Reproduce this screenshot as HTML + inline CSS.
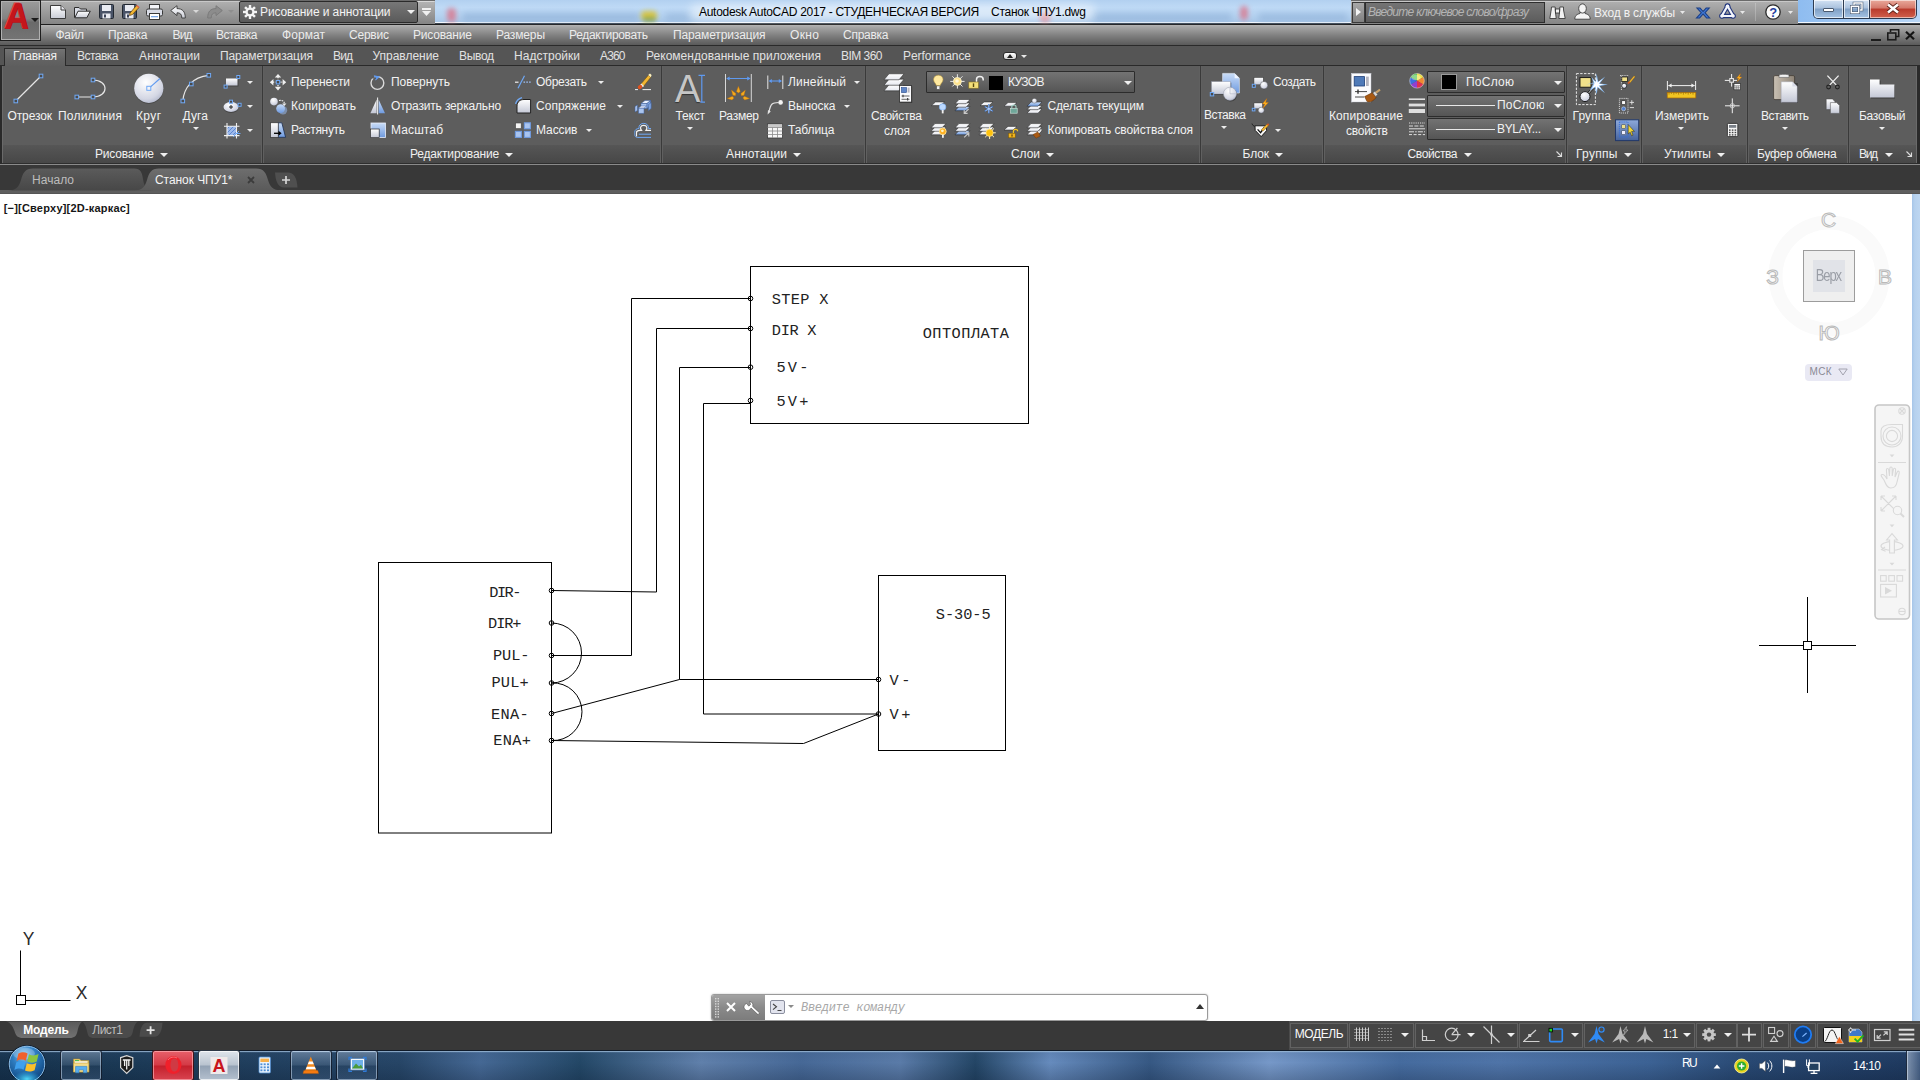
<!DOCTYPE html>
<html lang="ru"><head><meta charset="utf-8"><title>Autodesk AutoCAD 2017 - Станок ЧПУ1.dwg</title>
<style>
html,body{margin:0;padding:0;background:#fff;overflow:hidden}
#root{position:relative;width:1920px;height:1080px;overflow:hidden;background:#fff;font-family:"Liberation Sans",sans-serif}
#root div,#root span,#root svg{position:absolute}
#root svg{overflow:visible}
.t{white-space:pre;}
.pt{background:linear-gradient(#565656,#474747);}
.dd{background:linear-gradient(#737373 0,#646464 50%,#555 100%);border:1px solid #2c2c2c;box-sizing:border-box;border-radius:1px}
.sb{border:1px solid #626262;box-sizing:border-box;background:#454545}
</style></head><body><div id="root">

<div style="left:0px;top:0px;width:1920px;height:25px;background:linear-gradient(#b2d0f0 0,#bfdaf6 30%,#b6d3f1 60%,#aac8e8 86%,#f2f7fd 88%,#f2f7fd 92%,#4f5f72 92%,#1e1e1e 97%)"></div>
<div style="left:462px;top:13px;width:178px;height:8px;background:#86a9d2;opacity:0.55;filter:blur(3px);border-radius:4px"></div>
<div style="left:665px;top:13px;width:26px;height:8px;background:#86a9d2;opacity:0.45;filter:blur(3px);border-radius:4px"></div>
<div style="left:1092px;top:13px;width:140px;height:8px;background:#86a9d2;opacity:0.5;filter:blur(3px);border-radius:4px"></div>
<div style="left:1258px;top:13px;width:90px;height:8px;background:#86a9d2;opacity:0.5;filter:blur(3px);border-radius:4px"></div>
<div style="left:447px;top:8px;width:9px;height:14px;background:#dc6f84;opacity:0.75;filter:blur(2.5px);border-radius:4px"></div>
<div style="left:641px;top:11px;width:16px;height:9px;background:#dcc228;opacity:0.85;filter:blur(2.5px);border-radius:4px"></div>
<div style="left:643px;top:17px;width:13px;height:5px;background:#5e8e3a;opacity:0.5;filter:blur(2px);border-radius:4px"></div>
<div style="left:1040px;top:12px;width:10px;height:10px;background:#e0707a;opacity:0.8;filter:blur(2.5px);border-radius:4px"></div>
<div style="left:1240px;top:6px;width:8px;height:14px;background:#dc6f84;opacity:0.75;filter:blur(2.5px);border-radius:4px"></div>
<div style="left:690px;top:4px;width:405px;height:16px;background:#fff;opacity:.5;filter:blur(5px);border-radius:9px"></div>
<span class="t" style="left:699.0px;top:3.5px;font:12px/16px 'Liberation Sans',sans-serif;color:#000;letter-spacing:-0.29px;">Autodesk AutoCAD 2017 - СТУДЕНЧЕСКАЯ ВЕРСИЯ    Станок ЧПУ1.dwg</span>
<div style="left:0px;top:0px;width:435px;height:25px;background:linear-gradient(#6a6a6a 0,#6a6a6a 4%,#c8c8c8 4%,#c8c8c8 8%,#aeaeae 9%,#858585 96%,#1e1e1e 96%)"></div>
<div style="left:1351px;top:0px;width:447px;height:25px;background:linear-gradient(#6a6a6a 0,#6a6a6a 4%,#c8c8c8 4%,#c8c8c8 8%,#aeaeae 9%,#858585 96%,#1e1e1e 96%)"></div>
<div style="left:0px;top:25px;width:1920px;height:21px;background:linear-gradient(#b4b4b4 0,#a6a6a6 10%,#808080 50%,#5a5a5a 95%,#2a2a2a 95.5%)"></div>
<div style="left:0px;top:46px;width:1920px;height:20px;background:#555;border-bottom:1px solid #2a2a2a;box-sizing:border-box"></div>
<div style="left:0px;top:66px;width:1920px;height:98px;background:#2f2f2f"></div>
<div style="left:2px;top:66px;width:1915px;height:79px;background:#5d5d5d"></div>
<div class="pt" style="left:2px;top:145px;width:1915px;height:18px;"></div>
<div style="left:0px;top:163px;width:1920px;height:1px;background:#2e2e2e"></div>
<div style="left:0px;top:164px;width:1920px;height:1px;background:#8a8a8a"></div>
<div style="left:0px;top:165px;width:1920px;height:26px;background:#383838"></div>
<div style="left:0px;top:190px;width:1920px;height:4px;background:linear-gradient(#5e5e5e 0,#5e5e5e 75%,#4c4c4c 100%)"></div>
<div style="left:0px;top:194px;width:1912px;height:827px;background:#fff"></div>
<div style="left:1912px;top:194px;width:8px;height:827px;background:linear-gradient(90deg,#a6c5e8 0,#b6d1ee 35%,#bdd6f1 100%)"></div>
<div style="left:0px;top:1021px;width:1920px;height:29px;background:#383838"></div>
<div style="left:0px;top:1050px;width:1920px;height:30px;background:linear-gradient(90deg,#16324c 0,#1a3854 5%,#264566 20.8%,#456894 25%,#234766 30.2%,#6080ab 36.5%,#466896 41.7%,#5a7ba8 46.9%,#234565 50.8%,#668bbd 54.7%,#365883 59.9%,#7698c8 66.1%,#456b9e 72.9%,#4f74a8 78.1%,#3c6294 85.9%,#284872 91.1%,#1f3a60 99%)"></div>
<div style="left:0px;top:1050px;width:1920px;height:30px;background:linear-gradient(rgba(150,180,215,.55) 0,rgba(60,90,130,.15) 7%,rgba(10,25,45,0) 40%,rgba(8,20,40,.22) 100%);border-top:1px solid #0f1a28;box-sizing:border-box"></div>
<div style="left:0px;top:1051px;width:1920px;height:1px;background:rgba(150,180,210,.75)"></div>
<div style="left:0px;top:0px;width:41px;height:41px;background:#1e1e1e"></div>
<div style="left:1px;top:1px;width:39px;height:39px;background:linear-gradient(#9a9a9a 0,#828282 45%,#6a6a6a 55%,#747474 100%);border:1px solid #b0b0b0;box-sizing:border-box"></div>
<span class="t" style="left:2px;top:-3px;width:30px;text-align:center;font:bold 37px/40px 'Liberation Sans',sans-serif;color:#c4161c;transform:scale(.92,1) skewX(-4deg);text-shadow:1px 0 0 #8e0c10,-1px -1px 0 #e8474d">A</span>
<svg style="left:30.5px;top:17.5px" width="8" height="4" viewBox="0 0 8 4"><path d="M0 0H8L4.0 4Z" fill="#1a1a1a"/></svg>
<svg style="left:50px;top:5px;" width="16" height="14" viewBox="0 0 16 14"><defs><linearGradient id="wg" x1="0" y1="0" x2="0" y2="1"><stop offset="0" stop-color="#fff"/><stop offset="1" stop-color="#c9ccd6"/></linearGradient></defs><path d="M.5 .5H11L15.5 5V13.5H.5Z" fill="url(#wg)" stroke="#3c3c3c" stroke-width="1"/><path d="M11 .5V5H15.5" fill="#e8e8ee" stroke="#3c3c3c" stroke-width="1"/></svg>
<svg style="left:74px;top:5px;" width="17" height="14" viewBox="0 0 17 14"><path d="M.5 12.5V2.5H5L6.5 4H12.5V6" fill="#d8dbe4" stroke="#2e2e2e"/><path d="M.8 12.8L4 6.2H16.3L12.8 12.8Z" fill="url(#wg)" stroke="#2e2e2e"/></svg>
<svg style="left:99px;top:4px;" width="15" height="15" viewBox="0 0 15 15"><rect x=".5" y=".5" width="14" height="14" rx="1" fill="#4a5468" stroke="#222831"/><rect x="3" y="1" width="9" height="6" fill="#e9ebf2"/><rect x="3.5" y="9.5" width="8" height="5" fill="#e9ebf2"/><rect x="5" y="10.5" width="2" height="3" fill="#394156"/></svg>
<svg style="left:122px;top:4px;" width="17" height="15" viewBox="0 0 17 15"><rect x=".5" y=".5" width="14" height="14" rx="1" fill="#4a5468" stroke="#222831"/><rect x="3" y="1" width="9" height="6" fill="#e9ebf2"/><rect x="3.5" y="9.5" width="8" height="5" fill="#e9ebf2"/><rect x="5" y="10.5" width="2" height="3" fill="#394156"/><path d="M8 9L14.5 1.5 17 3.5 10.5 10.5 7.5 11.5Z" fill="#f2b632" stroke="#5a3b06" stroke-width=".7"/><path d="M14.5 1.5L17 3.5" stroke="#e8674a" stroke-width="1.6"/></svg>
<svg style="left:146px;top:4px;" width="17" height="16" viewBox="0 0 17 16"><rect x="3.5" y=".5" width="10" height="5" fill="#f4f5f9" stroke="#3a3a3a"/><rect x=".5" y="5" width="16" height="7" rx="1.5" fill="#d9dce6" stroke="#3a3a3a"/><rect x="3.5" y="9.5" width="10" height="6" fill="#fff" stroke="#3a3a3a"/><rect x="5" y="12" width="7" height="1.3" fill="#79a7e8"/></svg>
<svg style="left:170px;top:5px;" width="16" height="14" viewBox="0 0 16 14"><path d="M.7 5.5L7 .7V3.6C12.5 3.6 15.3 6.5 15.3 13H11.8C11.8 9.3 10.3 7.8 7 7.8V10.6Z" fill="url(#wg)" stroke="#3a3a3a" stroke-width=".9"/></svg>
<svg style="left:192.5px;top:10.0px" width="6" height="3" viewBox="0 0 6 3"><path d="M0 0H6L3.0 3Z" fill="#d8d8d8"/></svg>
<svg style="left:207px;top:5px;" width="16" height="14" viewBox="0 0 16 14"><path d="M15.3 5.5L9 .7V3.6C3.5 3.6 .7 6.5 .7 13H4.2C4.2 9.3 5.7 7.8 9 7.8V10.6Z" fill="#8c8c8c" stroke="#787878" stroke-width=".9"/></svg>
<svg style="left:228.0px;top:10.0px" width="6" height="3" viewBox="0 0 6 3"><path d="M0 0H6L3.0 3Z" fill="#8e8e8e"/></svg>
<div style="left:239px;top:1px;width:179px;height:22px;background:linear-gradient(#777,#5a5a5a);border:1px solid #2a2a2a;box-sizing:border-box;border-radius:2px"></div>
<div style="left:418px;top:1px;width:16px;height:22px;background:linear-gradient(#d8d8d8 0,#d8d8d8 5%,#b2b2b2 6%,#868686 100%)"></div>
<svg style="left:243px;top:5px;" width="14" height="14" viewBox="0 0 14 14"><g fill="#f4f4f4"><circle cx="7" cy="7" r="4.6"/><g transform="rotate(0 7 7)"><rect x="5.8" y="0" width="2.4" height="3"/><rect x="5.8" y="11" width="2.4" height="3"/></g><g transform="rotate(45 7 7)"><rect x="5.8" y="0" width="2.4" height="3"/><rect x="5.8" y="11" width="2.4" height="3"/></g><g transform="rotate(90 7 7)"><rect x="5.8" y="0" width="2.4" height="3"/><rect x="5.8" y="11" width="2.4" height="3"/></g><g transform="rotate(135 7 7)"><rect x="5.8" y="0" width="2.4" height="3"/><rect x="5.8" y="11" width="2.4" height="3"/></g></g><circle cx="7" cy="7" r="2.3" fill="#666"/></svg>
<span class="t" style="left:260.0px;top:3.5px;font:12px/16px 'Liberation Sans',sans-serif;color:#f4f4f4;letter-spacing:-0.10px;">Рисование и аннотации</span>
<svg style="left:407.0px;top:10.0px" width="8" height="4" viewBox="0 0 8 4"><path d="M0 0H8L4.0 4Z" fill="#f0f0f0"/></svg>
<div style="left:422px;top:8px;width:9px;height:2px;background:#f0f0f0"></div>
<svg style="left:422.0px;top:11.0px" width="9" height="5" viewBox="0 0 9 5"><path d="M0 0H9L4.5 5Z" fill="#f0f0f0"/></svg>
<span class="t" style="left:55.5px;top:26.5px;font:12px/16px 'Liberation Sans',sans-serif;color:#ececec;letter-spacing:-0.33px;">Файл</span>
<span class="t" style="left:108.0px;top:26.5px;font:12px/16px 'Liberation Sans',sans-serif;color:#ececec;letter-spacing:-0.21px;">Правка</span>
<span class="t" style="left:172.5px;top:26.5px;font:12px/16px 'Liberation Sans',sans-serif;color:#ececec;letter-spacing:-0.85px;">Вид</span>
<span class="t" style="left:216.0px;top:26.5px;font:12px/16px 'Liberation Sans',sans-serif;color:#ececec;letter-spacing:-0.52px;">Вставка</span>
<span class="t" style="left:282.0px;top:26.5px;font:12px/16px 'Liberation Sans',sans-serif;color:#ececec;letter-spacing:0.07px;">Формат</span>
<span class="t" style="left:349.0px;top:26.5px;font:12px/16px 'Liberation Sans',sans-serif;color:#ececec;letter-spacing:-0.22px;">Сервис</span>
<span class="t" style="left:413.0px;top:26.5px;font:12px/16px 'Liberation Sans',sans-serif;color:#ececec;letter-spacing:-0.18px;">Рисование</span>
<span class="t" style="left:496.0px;top:26.5px;font:12px/16px 'Liberation Sans',sans-serif;color:#ececec;letter-spacing:-0.14px;">Размеры</span>
<span class="t" style="left:569.0px;top:26.5px;font:12px/16px 'Liberation Sans',sans-serif;color:#ececec;letter-spacing:-0.32px;">Редактировать</span>
<span class="t" style="left:673.0px;top:26.5px;font:12px/16px 'Liberation Sans',sans-serif;color:#ececec;letter-spacing:-0.14px;">Параметризация</span>
<span class="t" style="left:790.0px;top:26.5px;font:12px/16px 'Liberation Sans',sans-serif;color:#ececec;letter-spacing:0.38px;">Окно</span>
<span class="t" style="left:843.0px;top:26.5px;font:12px/16px 'Liberation Sans',sans-serif;color:#ececec;letter-spacing:-0.26px;">Справка</span>
<div style="left:1871px;top:39px;width:10px;height:2px;background:#1c1c1c"></div>
<svg style="left:1887px;top:29px;" width="13" height="12" viewBox="0 0 13 12"><path d="M3.5 3V.8H11.7V7.5H9" fill="none" stroke="#1c1c1c" stroke-width="1.6"/><rect x=".8" y="4" width="8" height="6.8" fill="none" stroke="#1c1c1c" stroke-width="1.6"/></svg>
<svg style="left:1905px;top:31px;" width="10" height="9" viewBox="0 0 10 9"><path d="M1 .8L9 8.2M9 .8L1 8.2" stroke="#141414" stroke-width="2.2"/></svg>
<div style="left:1352px;top:2px;width:13px;height:21px;background:linear-gradient(#a8a8a8,#808080);border:1px solid #3a3a3a;box-sizing:border-box"></div>
<svg style="left:1356px;top:8px;" width="5" height="8" viewBox="0 0 5 8"><path d="M0 0L5 4L0 8Z" fill="#f4f4f4"/></svg>
<div style="left:1365px;top:2px;width:180px;height:21px;background:linear-gradient(#747474,#5c5c5c);border:1px solid #2e2e2e;box-sizing:border-box"></div>
<span class="t" style="left:1368.0px;top:3.5px;font:italic 12px/16px 'Liberation Sans',sans-serif;color:#b4b4b4;letter-spacing:-0.71px;">Введите ключевое слово/фразу</span>
<svg style="left:1549px;top:4px;" width="17" height="16" viewBox="0 0 17 16"><g fill="#f2f2f2" stroke="#2e2e2e" stroke-width=".8"><path d="M2.5 3H6.2V6L7.2 14.5H.8L2.2 6Z"/><path d="M10.8 3H14.5V6L16.2 14.5H9.8L10.8 6Z"/><rect x="6.5" y="5" width="4" height="4"/></g></svg>
<svg style="left:1574px;top:3px;" width="17" height="17" viewBox="0 0 17 17"><g fill="#f4f4f4" stroke="#2e2e2e" stroke-width=".8"><path d="M.8 16.2C.8 12 4 11 6 10.5V9.2H11V10.5C13 11 16.2 12 16.2 16.2Z"/><ellipse cx="8.5" cy="5.5" rx="3.8" ry="4.6"/></g></svg>
<span class="t" style="left:1594.0px;top:4.7px;font:12px/16px 'Liberation Sans',sans-serif;color:#f2f2f2;letter-spacing:-0.16px;">Вход в службы</span>
<svg style="left:1679.5px;top:10.5px" width="5" height="3" viewBox="0 0 5 3"><path d="M0 0H5L2.5 3Z" fill="#e8e8e8"/></svg>
<span class="t" style="left:1693px;top:2.5px;width:20px;text-align:center;font:bold 15.5px/20px 'Liberation Sans',sans-serif;color:#3f78d4;-webkit-text-stroke:.9px #1c3f86;transform:scale(1.32,1)">X</span>
<svg style="left:1719px;top:3px;" width="17" height="16" viewBox="0 0 17 16"><path d="M8.5 3L14.2 13H2.8Z" fill="none" stroke="#24387e" stroke-width="4.4" stroke-linejoin="round"/><circle cx="8.5" cy="3.2" r="2.9" fill="#24387e"/><circle cx="2.9" cy="13" r="2.7" fill="#24387e"/><circle cx="14.1" cy="13" r="2.7" fill="#24387e"/><path d="M8.5 3L14.2 13H2.8Z" fill="none" stroke="#f4f6fc" stroke-width="2.2" stroke-linejoin="round"/><circle cx="8.5" cy="3.2" r="1.8" fill="#f4f6fc"/><circle cx="2.9" cy="13" r="1.7" fill="#f4f6fc"/><circle cx="14.1" cy="13" r="1.7" fill="#f4f6fc"/></svg>
<svg style="left:1739.5px;top:10.5px" width="5" height="3" viewBox="0 0 5 3"><path d="M0 0H5L2.5 3Z" fill="#e8e8e8"/></svg>
<div style="left:1755px;top:3px;width:1px;height:18px;background:rgba(255,255,255,.22)"></div>
<svg style="left:1765px;top:4px;" width="16" height="16" viewBox="0 0 16 16"><circle cx="8" cy="8" r="7.2" fill="#fdfdfd" stroke="#2a2a2a" stroke-width="1.3"/></svg>
<span class="t" style="left:1769.3px;top:3.5px;font:bold 13px/17px 'Liberation Sans',sans-serif;color:#1f3fa0;letter-spacing:0.00px;">?</span>
<svg style="left:1787.5px;top:10.5px" width="5" height="3" viewBox="0 0 5 3"><path d="M0 0H5L2.5 3Z" fill="#e8e8e8"/></svg>
<div style="left:1798px;top:0px;width:122px;height:22px;background:linear-gradient(90deg,#8ebcf0,#a8ccf4 60%,#b8d6f6);"></div>
<div style="left:1813px;top:0px;width:104px;height:19px;background:#2d3b50;border-radius:0 0 5px 5px"></div>
<div style="left:1814px;top:0px;width:29px;height:18px;background:linear-gradient(#d3e2f3 0,#a9c1dd 45%,#7f9fc4 50%,#a5c3e4 100%);border-radius:0 0 0 4px;box-shadow:inset 0 0 0 1px rgba(255,255,255,.65)"></div>
<div style="left:1844px;top:0px;width:25px;height:18px;background:linear-gradient(#d3e2f3 0,#a9c1dd 45%,#7f9fc4 50%,#a5c3e4 100%);box-shadow:inset 0 0 0 1px rgba(255,255,255,.65)"></div>
<div style="left:1870px;top:0px;width:46px;height:18px;background:linear-gradient(#e9a99b 0,#d4786a 45%,#b93a2b 50%,#d0614c 100%);border-radius:0 0 4px 0;box-shadow:inset 0 0 0 1px rgba(255,255,255,.55)"></div>
<div style="left:1823px;top:8px;width:11px;height:4px;background:#fff;border:1px solid #4a5a70;box-sizing:border-box;border-radius:1px"></div>
<svg style="left:1850px;top:2px;" width="13" height="12" viewBox="0 0 13 12"><path d="M4 3.5V1H12V8H9.5" fill="none" stroke="#4a5a70" stroke-width="2.6"/><path d="M4 3.5V1H12V8H9.5" fill="none" stroke="#fff" stroke-width="1.4"/><rect x="1.3" y="4.3" width="7.4" height="6.4" fill="none" stroke="#4a5a70" stroke-width="2.6"/><rect x="1.3" y="4.3" width="7.4" height="6.4" fill="none" stroke="#fff" stroke-width="1.4"/></svg>
<svg style="left:1886px;top:3px;" width="14" height="11" viewBox="0 0 14 11"><path d="M2 1.5L12 9.5M12 1.5L2 9.5" stroke="#5a2018" stroke-width="4.2"/><path d="M2 1.5L12 9.5M12 1.5L2 9.5" stroke="#fff" stroke-width="2.6"/></svg>
<div style="left:4px;top:48px;width:62px;height:18px;background:linear-gradient(#737373,#636363 60%,#5e5e5e);border:1px solid #2a2a2a;border-bottom:none;box-sizing:border-box"></div>
<span class="t" style="left:13.0px;top:47.5px;font:12px/16px 'Liberation Sans',sans-serif;color:#f0f0f0;letter-spacing:-0.28px;">Главная</span>
<span class="t" style="left:77.0px;top:47.5px;font:12px/16px 'Liberation Sans',sans-serif;color:#e2e2e2;letter-spacing:-0.52px;">Вставка</span>
<span class="t" style="left:139.0px;top:47.5px;font:12px/16px 'Liberation Sans',sans-serif;color:#e2e2e2;letter-spacing:0.13px;">Аннотации</span>
<span class="t" style="left:220.0px;top:47.5px;font:12px/16px 'Liberation Sans',sans-serif;color:#e2e2e2;letter-spacing:-0.10px;">Параметризация</span>
<span class="t" style="left:333.0px;top:47.5px;font:12px/16px 'Liberation Sans',sans-serif;color:#e2e2e2;letter-spacing:-0.85px;">Вид</span>
<span class="t" style="left:372.5px;top:47.5px;font:12px/16px 'Liberation Sans',sans-serif;color:#e2e2e2;letter-spacing:-0.02px;">Управление</span>
<span class="t" style="left:459.0px;top:47.5px;font:12px/16px 'Liberation Sans',sans-serif;color:#e2e2e2;letter-spacing:-0.32px;">Вывод</span>
<span class="t" style="left:514.0px;top:47.5px;font:12px/16px 'Liberation Sans',sans-serif;color:#e2e2e2;letter-spacing:0.02px;">Надстройки</span>
<span class="t" style="left:600.0px;top:47.5px;font:12px/16px 'Liberation Sans',sans-serif;color:#e2e2e2;letter-spacing:-0.84px;">A360</span>
<span class="t" style="left:646.0px;top:47.5px;font:12px/16px 'Liberation Sans',sans-serif;color:#e2e2e2;letter-spacing:0.03px;">Рекомендованные приложения</span>
<span class="t" style="left:841.0px;top:47.5px;font:12px/16px 'Liberation Sans',sans-serif;color:#e2e2e2;letter-spacing:-0.53px;">BIM 360</span>
<span class="t" style="left:903.0px;top:47.5px;font:12px/16px 'Liberation Sans',sans-serif;color:#e2e2e2;letter-spacing:-0.07px;">Performance</span>
<div style="left:1003px;top:52px;width:14px;height:8px;background:linear-gradient(#fff,#d4d4d4);border-radius:3px;border:1px solid #2c2c2c;box-sizing:border-box"></div>
<svg style="left:1007px;top:54px;" width="6" height="4" viewBox="0 0 6 4"><path d="M0 4H6L3 0Z" fill="#222"/></svg>
<svg style="left:1020.5px;top:54.5px" width="6" height="3" viewBox="0 0 6 3"><path d="M0 0H6L3.0 3Z" fill="#e8e8e8"/></svg>
<div style="left:261px;top:66px;width:1px;height:97px;background:#606060"></div>
<div style="left:262px;top:66px;width:1px;height:97px;background:#3a3a3a"></div>
<div style="left:263px;top:66px;width:1px;height:97px;background:#606060"></div>
<div style="left:660px;top:66px;width:1px;height:97px;background:#606060"></div>
<div style="left:661px;top:66px;width:1px;height:97px;background:#3a3a3a"></div>
<div style="left:662px;top:66px;width:1px;height:97px;background:#606060"></div>
<div style="left:864px;top:66px;width:1px;height:97px;background:#606060"></div>
<div style="left:865px;top:66px;width:1px;height:97px;background:#3a3a3a"></div>
<div style="left:866px;top:66px;width:1px;height:97px;background:#606060"></div>
<div style="left:1199px;top:66px;width:1px;height:97px;background:#606060"></div>
<div style="left:1200px;top:66px;width:1px;height:97px;background:#3a3a3a"></div>
<div style="left:1201px;top:66px;width:1px;height:97px;background:#606060"></div>
<div style="left:1322px;top:66px;width:1px;height:97px;background:#606060"></div>
<div style="left:1323px;top:66px;width:1px;height:97px;background:#3a3a3a"></div>
<div style="left:1324px;top:66px;width:1px;height:97px;background:#606060"></div>
<div style="left:1565px;top:66px;width:1px;height:97px;background:#606060"></div>
<div style="left:1566px;top:66px;width:1px;height:97px;background:#3a3a3a"></div>
<div style="left:1567px;top:66px;width:1px;height:97px;background:#606060"></div>
<div style="left:1640px;top:66px;width:1px;height:97px;background:#606060"></div>
<div style="left:1641px;top:66px;width:1px;height:97px;background:#3a3a3a"></div>
<div style="left:1642px;top:66px;width:1px;height:97px;background:#606060"></div>
<div style="left:1746px;top:66px;width:1px;height:97px;background:#606060"></div>
<div style="left:1747px;top:66px;width:1px;height:97px;background:#3a3a3a"></div>
<div style="left:1748px;top:66px;width:1px;height:97px;background:#606060"></div>
<div style="left:1847px;top:66px;width:1px;height:97px;background:#606060"></div>
<div style="left:1848px;top:66px;width:1px;height:97px;background:#3a3a3a"></div>
<div style="left:1849px;top:66px;width:1px;height:97px;background:#606060"></div>
<div style="left:0px;top:66px;width:2px;height:98px;background:#2a2a2a"></div>
<div style="left:2px;top:66px;width:1px;height:97px;background:#6a6a6a"></div>
<div style="left:1917px;top:66px;width:3px;height:98px;background:#2a2a2a"></div>
<div style="left:1916px;top:66px;width:1px;height:97px;background:#6a6a6a"></div>
<span class="t" style="left:95.0px;top:145.5px;font:12px/16px 'Liberation Sans',sans-serif;color:#f0f0f0;letter-spacing:-0.18px;">Рисование</span>
<svg style="left:160.0px;top:152.5px" width="8" height="4" viewBox="0 0 8 4"><path d="M0 0H8L4.0 4Z" fill="#f0f0f0"/></svg>
<span class="t" style="left:410.0px;top:145.5px;font:12px/16px 'Liberation Sans',sans-serif;color:#f0f0f0;letter-spacing:-0.18px;">Редактирование</span>
<svg style="left:505.0px;top:152.5px" width="8" height="4" viewBox="0 0 8 4"><path d="M0 0H8L4.0 4Z" fill="#f0f0f0"/></svg>
<span class="t" style="left:726.0px;top:145.5px;font:12px/16px 'Liberation Sans',sans-serif;color:#f0f0f0;letter-spacing:0.13px;">Аннотации</span>
<svg style="left:793.0px;top:152.5px" width="8" height="4" viewBox="0 0 8 4"><path d="M0 0H8L4.0 4Z" fill="#f0f0f0"/></svg>
<span class="t" style="left:1011.0px;top:145.5px;font:12px/16px 'Liberation Sans',sans-serif;color:#f0f0f0;letter-spacing:-0.06px;">Слои</span>
<svg style="left:1046.0px;top:152.5px" width="8" height="4" viewBox="0 0 8 4"><path d="M0 0H8L4.0 4Z" fill="#f0f0f0"/></svg>
<span class="t" style="left:1242.5px;top:145.5px;font:12px/16px 'Liberation Sans',sans-serif;color:#f0f0f0;letter-spacing:-0.10px;">Блок</span>
<svg style="left:1275.0px;top:152.5px" width="8" height="4" viewBox="0 0 8 4"><path d="M0 0H8L4.0 4Z" fill="#f0f0f0"/></svg>
<span class="t" style="left:1407.5px;top:145.5px;font:12px/16px 'Liberation Sans',sans-serif;color:#f0f0f0;letter-spacing:-0.38px;">Свойства</span>
<svg style="left:1464.0px;top:152.5px" width="8" height="4" viewBox="0 0 8 4"><path d="M0 0H8L4.0 4Z" fill="#f0f0f0"/></svg>
<span class="t" style="left:1576.0px;top:145.5px;font:12px/16px 'Liberation Sans',sans-serif;color:#f0f0f0;letter-spacing:0.30px;">Группы</span>
<svg style="left:1624.0px;top:152.5px" width="8" height="4" viewBox="0 0 8 4"><path d="M0 0H8L4.0 4Z" fill="#f0f0f0"/></svg>
<span class="t" style="left:1664.0px;top:145.5px;font:12px/16px 'Liberation Sans',sans-serif;color:#f0f0f0;letter-spacing:-0.11px;">Утилиты</span>
<svg style="left:1717.0px;top:152.5px" width="8" height="4" viewBox="0 0 8 4"><path d="M0 0H8L4.0 4Z" fill="#f0f0f0"/></svg>
<span class="t" style="left:1757.0px;top:145.5px;font:12px/16px 'Liberation Sans',sans-serif;color:#f0f0f0;letter-spacing:-0.18px;">Буфер обмена</span>
<span class="t" style="left:1859.0px;top:145.5px;font:12px/16px 'Liberation Sans',sans-serif;color:#f0f0f0;letter-spacing:-1.35px;">Вид</span>
<svg style="left:1885.0px;top:152.5px" width="8" height="4" viewBox="0 0 8 4"><path d="M0 0H8L4.0 4Z" fill="#f0f0f0"/></svg>
<svg style="left:1556px;top:151px;" width="6" height="6" viewBox="0 0 6 6"><path d="M.5 .5L5 5M5.5 1.5V5.5H1.5" stroke="#dcdcdc" stroke-width="1.1" fill="none"/></svg>
<svg style="left:1906px;top:151px;" width="6" height="6" viewBox="0 0 6 6"><path d="M.5 .5L5 5M5.5 1.5V5.5H1.5" stroke="#dcdcdc" stroke-width="1.1" fill="none"/></svg>
<span class="t" style="left:7.5px;top:108.0px;font:12px/16px 'Liberation Sans',sans-serif;color:#f2f2f2;letter-spacing:-0.11px;">Отрезок</span>
<span class="t" style="left:58.0px;top:108.0px;font:12px/16px 'Liberation Sans',sans-serif;color:#f2f2f2;letter-spacing:0.22px;">Полилиния</span>
<span class="t" style="left:136.0px;top:108.0px;font:12px/16px 'Liberation Sans',sans-serif;color:#f2f2f2;letter-spacing:0.37px;">Круг</span>
<span class="t" style="left:182.5px;top:108.0px;font:12px/16px 'Liberation Sans',sans-serif;color:#f2f2f2;letter-spacing:0.11px;">Дуга</span>
<span class="t" style="left:291.0px;top:73.5px;font:12px/16px 'Liberation Sans',sans-serif;color:#f2f2f2;letter-spacing:-0.14px;">Перенести</span>
<span class="t" style="left:291.0px;top:97.5px;font:12px/16px 'Liberation Sans',sans-serif;color:#f2f2f2;letter-spacing:0.05px;">Копировать</span>
<span class="t" style="left:291.0px;top:121.5px;font:12px/16px 'Liberation Sans',sans-serif;color:#f2f2f2;letter-spacing:-0.33px;">Растянуть</span>
<span class="t" style="left:391.0px;top:73.5px;font:12px/16px 'Liberation Sans',sans-serif;color:#f2f2f2;letter-spacing:-0.03px;">Повернуть</span>
<span class="t" style="left:391.0px;top:97.5px;font:12px/16px 'Liberation Sans',sans-serif;color:#f2f2f2;letter-spacing:-0.16px;">Отразить зеркально</span>
<span class="t" style="left:391.0px;top:121.5px;font:12px/16px 'Liberation Sans',sans-serif;color:#f2f2f2;letter-spacing:0.11px;">Масштаб</span>
<span class="t" style="left:536.0px;top:73.5px;font:12px/16px 'Liberation Sans',sans-serif;color:#f2f2f2;letter-spacing:-0.28px;">Обрезать</span>
<span class="t" style="left:536.0px;top:97.5px;font:12px/16px 'Liberation Sans',sans-serif;color:#f2f2f2;letter-spacing:0.05px;">Сопряжение</span>
<span class="t" style="left:536.0px;top:121.5px;font:12px/16px 'Liberation Sans',sans-serif;color:#f2f2f2;letter-spacing:-0.08px;">Массив</span>
<span class="t" style="left:675.5px;top:108.0px;font:12px/16px 'Liberation Sans',sans-serif;color:#f2f2f2;letter-spacing:-0.18px;">Текст</span>
<span class="t" style="left:719.0px;top:108.0px;font:12px/16px 'Liberation Sans',sans-serif;color:#f2f2f2;letter-spacing:-0.25px;">Размер</span>
<span class="t" style="left:788.0px;top:73.5px;font:12px/16px 'Liberation Sans',sans-serif;color:#f2f2f2;letter-spacing:0.21px;">Линейный</span>
<span class="t" style="left:788.0px;top:97.5px;font:12px/16px 'Liberation Sans',sans-serif;color:#f2f2f2;letter-spacing:-0.10px;">Выноска</span>
<span class="t" style="left:788.0px;top:121.5px;font:12px/16px 'Liberation Sans',sans-serif;color:#f2f2f2;letter-spacing:-0.09px;">Таблица</span>
<span class="t" style="left:871.0px;top:108.0px;font:12px/16px 'Liberation Sans',sans-serif;color:#f2f2f2;letter-spacing:-0.24px;">Свойства</span>
<span class="t" style="left:884.0px;top:123.0px;font:12px/16px 'Liberation Sans',sans-serif;color:#f2f2f2;letter-spacing:-0.10px;">слоя</span>
<span class="t" style="left:1047.5px;top:97.5px;font:12px/16px 'Liberation Sans',sans-serif;color:#f2f2f2;letter-spacing:-0.16px;">Сделать текущим</span>
<span class="t" style="left:1047.5px;top:121.5px;font:12px/16px 'Liberation Sans',sans-serif;color:#f2f2f2;letter-spacing:-0.09px;">Копировать свойства слоя</span>
<span class="t" style="left:1204.0px;top:106.5px;font:12px/16px 'Liberation Sans',sans-serif;color:#f2f2f2;letter-spacing:-0.43px;">Вставка</span>
<span class="t" style="left:1273.0px;top:73.5px;font:12px/16px 'Liberation Sans',sans-serif;color:#f2f2f2;letter-spacing:-0.43px;">Создать</span>
<span class="t" style="left:1329.0px;top:108.0px;font:12px/16px 'Liberation Sans',sans-serif;color:#f2f2f2;letter-spacing:0.09px;">Копирование</span>
<span class="t" style="left:1346.0px;top:123.0px;font:12px/16px 'Liberation Sans',sans-serif;color:#f2f2f2;letter-spacing:-0.25px;">свойств</span>
<span class="t" style="left:1572.5px;top:108.0px;font:12px/16px 'Liberation Sans',sans-serif;color:#f2f2f2;letter-spacing:0.09px;">Группа</span>
<span class="t" style="left:1655.0px;top:108.0px;font:12px/16px 'Liberation Sans',sans-serif;color:#f2f2f2;letter-spacing:-0.02px;">Измерить</span>
<span class="t" style="left:1761.0px;top:108.0px;font:12px/16px 'Liberation Sans',sans-serif;color:#f2f2f2;letter-spacing:-0.41px;">Вставить</span>
<span class="t" style="left:1859.0px;top:108.0px;font:12px/16px 'Liberation Sans',sans-serif;color:#f2f2f2;letter-spacing:-0.27px;">Базовый</span>
<svg style="left:145.5px;top:127.0px" width="6" height="3" viewBox="0 0 6 3"><path d="M0 0H6L3.0 3Z" fill="#ececec"/></svg>
<svg style="left:192.5px;top:127.0px" width="6" height="3" viewBox="0 0 6 3"><path d="M0 0H6L3.0 3Z" fill="#ececec"/></svg>
<svg style="left:246.5px;top:81.0px" width="6" height="3" viewBox="0 0 6 3"><path d="M0 0H6L3.0 3Z" fill="#ececec"/></svg>
<svg style="left:246.5px;top:105.0px" width="6" height="3" viewBox="0 0 6 3"><path d="M0 0H6L3.0 3Z" fill="#ececec"/></svg>
<svg style="left:246.5px;top:129.0px" width="6" height="3" viewBox="0 0 6 3"><path d="M0 0H6L3.0 3Z" fill="#ececec"/></svg>
<svg style="left:597.5px;top:81.0px" width="6" height="3" viewBox="0 0 6 3"><path d="M0 0H6L3.0 3Z" fill="#ececec"/></svg>
<svg style="left:616.5px;top:105.0px" width="6" height="3" viewBox="0 0 6 3"><path d="M0 0H6L3.0 3Z" fill="#ececec"/></svg>
<svg style="left:585.5px;top:129.0px" width="6" height="3" viewBox="0 0 6 3"><path d="M0 0H6L3.0 3Z" fill="#ececec"/></svg>
<svg style="left:686.5px;top:127.0px" width="6" height="3" viewBox="0 0 6 3"><path d="M0 0H6L3.0 3Z" fill="#ececec"/></svg>
<svg style="left:854.0px;top:81.0px" width="6" height="3" viewBox="0 0 6 3"><path d="M0 0H6L3.0 3Z" fill="#ececec"/></svg>
<svg style="left:843.5px;top:105.0px" width="6" height="3" viewBox="0 0 6 3"><path d="M0 0H6L3.0 3Z" fill="#ececec"/></svg>
<svg style="left:1221.0px;top:125.5px" width="6" height="3" viewBox="0 0 6 3"><path d="M0 0H6L3.0 3Z" fill="#ececec"/></svg>
<svg style="left:1274.5px;top:129.0px" width="6" height="3" viewBox="0 0 6 3"><path d="M0 0H6L3.0 3Z" fill="#ececec"/></svg>
<svg style="left:1678.0px;top:127.0px" width="6" height="3" viewBox="0 0 6 3"><path d="M0 0H6L3.0 3Z" fill="#ececec"/></svg>
<svg style="left:1782.0px;top:127.0px" width="6" height="3" viewBox="0 0 6 3"><path d="M0 0H6L3.0 3Z" fill="#ececec"/></svg>
<svg style="left:1879.0px;top:127.0px" width="6" height="3" viewBox="0 0 6 3"><path d="M0 0H6L3.0 3Z" fill="#ececec"/></svg>
<div class="dd" style="left:926px;top:71px;width:209px;height:22px;"></div>
<div style="left:989px;top:76px;width:14px;height:14px;background:#000"></div>
<span class="t" style="left:1008.0px;top:73.5px;font:12px/16px 'Liberation Sans',sans-serif;color:#f2f2f2;letter-spacing:-0.61px;">КУЗОВ</span>
<svg style="left:1123.5px;top:80.5px" width="8" height="4" viewBox="0 0 8 4"><path d="M0 0H8L4.0 4Z" fill="#f0f0f0"/></svg>
<div class="dd" style="left:1427px;top:71px;width:138px;height:22px;"></div>
<div class="dd" style="left:1427px;top:95px;width:138px;height:22px;"></div>
<div class="dd" style="left:1427px;top:118px;width:138px;height:22px;"></div>
<div style="left:1441px;top:74px;width:16px;height:16px;background:#000;border:1px solid #9a9a9a;box-sizing:border-box"></div>
<span class="t" style="left:1466.0px;top:73.5px;font:12px/16px 'Liberation Sans',sans-serif;color:#f2f2f2;letter-spacing:0.24px;">ПоСлою</span>
<div style="left:1436px;top:105px;width:59px;height:1px;background:#e8e8e8"></div>
<div style="left:1436px;top:129px;width:59px;height:1px;background:#e8e8e8"></div>
<div style="left:1497px;top:96px;width:47px;height:20px;overflow:hidden">
<span class="t" style="left:0.0px;top:1.0px;font:12px/16px 'Liberation Sans',sans-serif;color:#f2f2f2;letter-spacing:0.24px;">ПоСлою</span>
</div>
<span class="t" style="left:1497.0px;top:120.5px;font:12px/16px 'Liberation Sans',sans-serif;color:#f2f2f2;letter-spacing:-0.32px;">BYLAY...</span>
<svg style="left:1553.5px;top:80.5px" width="8" height="4" viewBox="0 0 8 4"><path d="M0 0H8L4.0 4Z" fill="#f0f0f0"/></svg>
<svg style="left:1553.5px;top:103.5px" width="8" height="4" viewBox="0 0 8 4"><path d="M0 0H8L4.0 4Z" fill="#f0f0f0"/></svg>
<svg style="left:1553.5px;top:127.5px" width="8" height="4" viewBox="0 0 8 4"><path d="M0 0H8L4.0 4Z" fill="#f0f0f0"/></svg>
<svg width="0" height="0" style="left:0;top:0"><defs>
<linearGradient id="gw" x1="0" y1="0" x2="0" y2="1"><stop offset="0" stop-color="#ffffff"/><stop offset="1" stop-color="#c4c8d6"/></linearGradient>
<linearGradient id="gs" x1="0" y1="0" x2="0" y2="1"><stop offset="0" stop-color="#ffffff"/><stop offset="1" stop-color="#e6e8ef"/></linearGradient>
<linearGradient id="gb" x1="0" y1="0" x2="0" y2="1"><stop offset="0" stop-color="#c9dcf7"/><stop offset="1" stop-color="#6f9be0"/></linearGradient>
<linearGradient id="gy" x1="0" y1="0" x2="0" y2="1"><stop offset="0" stop-color="#fff3a8"/><stop offset="1" stop-color="#f2b41e"/></linearGradient>
<radialGradient id="gc" cx=".4" cy=".3" r=".8"><stop offset="0" stop-color="#ffffff"/><stop offset=".7" stop-color="#d4d7e4"/><stop offset="1" stop-color="#aab0c6"/></radialGradient>
</defs></svg>
<svg style="left:0;top:0" width="1920" height="200" viewBox="0 0 1920 200"><path d="M15.8 101L41 76" stroke="#e6e6e6" stroke-width="1.2"/><rect x="39.2" y="74.2" width="3.6" height="3.6" fill="#4a4a4a" stroke="#6fa8f5" stroke-width="1"/><rect x="14.0" y="99.2" width="3.6" height="3.6" fill="#4a4a4a" stroke="#6fa8f5" stroke-width="1"/>
<path d="M76.8 97H93M93 97C109 97 109 80 93 80" fill="none" stroke="#e6e6e6" stroke-width="1.2"/><rect x="91.2" y="78.2" width="3.6" height="3.6" fill="#4a4a4a" stroke="#6fa8f5" stroke-width="1"/><rect x="75.0" y="95.2" width="3.6" height="3.6" fill="#4a4a4a" stroke="#6fa8f5" stroke-width="1"/><rect x="91.2" y="95.2" width="3.6" height="3.6" fill="#4a4a4a" stroke="#6fa8f5" stroke-width="1"/>
<circle cx="148.8" cy="89.3" r="14.6" fill="#3a3a3a" opacity=".5"/><circle cx="148.8" cy="88.3" r="14.6" fill="url(#gc)"/><path d="M148.8 88.3L160 78.5" stroke="#5f9af0" stroke-width="1.1"/><rect x="146.8" y="86.3" width="4" height="4" fill="#f4f4f8" stroke="#6fa8f5"/>
<path d="M182.8 101C184 88 192 77 208.8 75.3" fill="none" stroke="#e6e6e6" stroke-width="1.2"/><rect x="207.0" y="73.5" width="3.6" height="3.6" fill="#4a4a4a" stroke="#6fa8f5" stroke-width="1"/><rect x="189.5" y="82.2" width="3.6" height="3.6" fill="#4a4a4a" stroke="#6fa8f5" stroke-width="1"/><rect x="181.0" y="99.2" width="3.6" height="3.6" fill="#4a4a4a" stroke="#6fa8f5" stroke-width="1"/>
<rect x="227.5" y="79.5" width="11" height="7" fill="#333" opacity=".6"/><rect x="226" y="78.5" width="11.5" height="7" fill="url(#gw)"/><rect x="236.8" y="75.5" width="3" height="3" fill="#4a4a4a" stroke="#6fa8f5" stroke-width="1"/><rect x="224.1" y="85.1" width="3" height="3" fill="#4a4a4a" stroke="#6fa8f5" stroke-width="1"/>
<ellipse cx="231" cy="108" rx="7.5" ry="5" fill="#333" opacity=".6"/><ellipse cx="231" cy="107" rx="7.5" ry="5" fill="url(#gc)"/><path d="M229 107H233M231 105V109" stroke="#222" stroke-width="1"/><rect x="229.5" y="100.2" width="3" height="3" fill="#4a4a4a" stroke="#6fa8f5" stroke-width="1"/><rect x="238.1" y="103.3" width="3" height="3" fill="#4a4a4a" stroke="#6fa8f5" stroke-width="1"/>
<rect x="227" y="126" width="9.5" height="9.5" fill="#9db9ea"/><path d="M227 129l3-3M227 133l7-7M228.5 135.5l8-8M232.5 135.5l4-4" stroke="#5c86d0" stroke-width="1"/><path d="M224 126.2H239.5M224 135.6H239.5M227 123V138.5M236.5 123V138.5" stroke="#efefef" stroke-width="1.1"/><path d="M233 137l6-6M235.5 133.5h5" stroke="#6fa8f5" stroke-width="1"/>
<g fill="#f0f0f0"><path d="M278 74l3.2 3.6h-6.4z"/><path d="M278 90.4l3.2-3.6h-6.4z"/><path d="M269.8 82.2l3.6-3.2v6.4z"/><path d="M286.2 82.2l-3.6-3.2v6.4z"/></g><path d="M278 77V79.5M278 85V87.4M273 82.2H275.5M280.5 82.2H283" stroke="#f0f0f0" stroke-width="1.3" stroke-dasharray="1.2 1"/><rect x="276.3" y="80.5" width="3.4" height="3.4" fill="#4a4a4a" stroke="#6fa8f5"/>
<circle cx="274" cy="101.6" r="3.8" fill="url(#gc)"/><circle cx="283" cy="110.3" r="4.2" fill="#8aa4cc" opacity=".7"/><circle cx="280.6" cy="108.6" r="4.4" fill="url(#gb)"/><path d="M279 100.5C283 100 284.5 101.5 284.3 104" fill="none" stroke="#ededed" stroke-width="1.2" stroke-dasharray="1.6 1"/><path d="M282.2 103.5h4.2l-2.1 2.6z" fill="#ededed"/>
<path d="M278 122.8H281.8L285.6 137.3H278Z" fill="url(#gb)" stroke="#1d2f52" stroke-width=".8"/><rect x="270.6" y="122.8" width="7.6" height="14.5" fill="url(#gw)" stroke="#2b2b2b" stroke-width=".6"/><path d="M274 133.3H279.5" stroke="#000" stroke-width="1.3"/><path d="M278.5 130.8L281.6 133.3 278.5 135.8Z" fill="#000"/>
<circle cx="377.4" cy="83" r="6.4" fill="none" stroke="#dadada" stroke-width="1.4"/><path d="M373.8 75.2L380.2 76.6 375.6 80.6Z" fill="#5f9af0"/><path d="M372 77.5L376 78.5" stroke="#5a5a5a" stroke-width="1.6"/>
<path d="M376.6 99.5V113.3H370.4Z" fill="url(#gw)"/><path d="M378.6 99.5V113.3H385Z" fill="url(#gb)"/><path d="M377.6 97.5V114.5" stroke="#f0f0f0" stroke-width="1"/>
<rect x="371" y="123" width="14.5" height="14.5" fill="url(#gb)" stroke="#e8eefb" stroke-width=".8"/><rect x="370.6" y="129" width="8.6" height="8.6" fill="url(#gw)" stroke="#2b2b2b" stroke-width=".7"/>
<path d="M515 82.2H518.5" stroke="#f0f0f0" stroke-width="1.2"/><path d="M523.5 82.2H531" stroke="#9dc0f5" stroke-width="1.2" stroke-dasharray="1.6 1.2"/><path d="M518 88.2L524.5 75.8" stroke="#6fa8f5" stroke-width="1.2"/>
<path d="M517 113V106C517 101.5 520.5 99.5 524 99.5H530.6V113Z" fill="url(#gw)" stroke="#222" stroke-width="1"/><path d="M515.6 103.8C516.4 100.6 518.6 98.6 522 97.6" fill="none" stroke="#6fa8f5" stroke-width="1.4"/>
<rect x="515.6" y="123" width="5.6" height="5.6" fill="#f4f4f4" stroke="#444" stroke-width=".6"/><rect x="524.4" y="122.8" width="6" height="6" fill="#a9c4ef" stroke="#6f9be0" stroke-width="1.1"/><rect x="515.4" y="131.4" width="6" height="6" fill="#a9c4ef" stroke="#6f9be0" stroke-width="1.1"/><rect x="524.4" y="131.4" width="6" height="6" fill="#a9c4ef" stroke="#6f9be0" stroke-width="1.1"/>
<path d="M635 89.6H638M642.5 89.6H651" stroke="#f0f0f0" stroke-width="1"/><path d="M640.5 84.5L648.4 75.2 650.8 77.2 643.2 86.8Z" fill="#f2b632" stroke="#6a4a08" stroke-width=".5"/><path d="M648.2 75L650 73.5 651.6 75 650.8 77.2Z" fill="#fff3c0"/><path d="M640.8 84.2L643.4 86.6" stroke="#e8e8e8" stroke-width="1.8"/><ellipse cx="640" cy="87" rx="2.4" ry="2" fill="#e0531e" transform="rotate(-40 640 87)"/>
<g stroke="#3d5f9e" stroke-width=".5"><path d="M641 103.5l4-3h5.6l-3.6 3z" fill="#eaf1ff"/><path d="M641 103.5h6v5h-6z" fill="#a9c4ef"/><path d="M647 103.5l3.6-3v4.6l-3.6 3.4z" fill="#7fa3df"/><path d="M635 106.5l2.4-1.6v5.6l-2.4 1.4z" fill="#a9c4ef"/><path d="M638.5 108h5.5v5.4h-5.5z" fill="#a9c4ef"/><path d="M638.5 108l2.5-2h5.5l-2.5 2z" fill="#eaf1ff"/><path d="M648.4 104.6l2.8-2v5.8l-2.8 2.4z" fill="#7fa3df"/></g>
<path d="M636.5 136.6V132.5C636.5 130.8 638 130.3 640 130.3H641.5C640 128.5 640 125.3 643.7 125.3 647.4 125.3 647.4 128.5 646 130.3H651" fill="none" stroke="#f2f2f2" stroke-width="1.2"/><path d="M638.8 134.2H651M651 137.4H637.8C634.5 137.4 634.7 135 634.7 132.5 634.7 129.6 636.6 128.6 639 128.5 638.6 125.6 640.4 123.4 643.7 123.4 647 123.4 648.8 125.6 648.4 128.5H651" fill="none" stroke="#6fa8f5" stroke-width="1"/>
<path d="M701.8 75.5V102M698.5 75.3H705M698.5 102.2H705" stroke="#5f9af0" stroke-width="1.2"/>
<path d="M725.5 74V102M751.3 74V102" stroke="#d8d8d8" stroke-width="1"/><path d="M727 78.5H750" stroke="#5f9af0" stroke-width="1"/><path d="M726.2 78.5l3.4-2v4zM750.6 78.5l-3.4-2v4z" fill="#5f9af0"/>
<g fill="#f6a91c" stroke="#b86a08" stroke-width=".3" transform="translate(738.4 95) scale(1.3) translate(-738.4 -95)"><path d="M738.4 88.3l1.5 4-1.5 1.2-1.5-1.2z"/><path d="M733 91.2l3.5 2.6-.4 1.8-2-.4z"/><path d="M743.8 91.2l-3.5 2.6.4 1.8 2-.4z"/><path d="M729.8 97.6l4-1.7 1.2 1.5-1.5 1.4z"/><path d="M747 97.6l-4-1.7-1.2 1.5 1.5 1.4z"/></g>
<path d="M767.8 75.5V89M782.8 75.5V89" stroke="#e4e4e4" stroke-width="1"/><path d="M770 81H781" stroke="#5f9af0" stroke-width="1.1"/><path d="M768.6 81l3.2-2v4zM782 81l-3.2-2v4z" fill="#5f9af0"/>
<path d="M769 112C770.5 104 772 102.5 778.5 102.5" fill="none" stroke="#e4e4e4" stroke-width="1.2"/><path d="M767.6 114.5l.4-4.4 2.8 1.4z" fill="#e4e4e4"/><circle cx="780.6" cy="102.4" r="2.3" fill="#f4f4f4"/>
<rect x="767.5" y="124" width="15" height="14" fill="#f7f7f7" stroke="#3a3a3a" stroke-width=".8"/><rect x="767.9" y="124.4" width="14.2" height="3" fill="#c9c9c9"/><path d="M767.5 127.5H782.5M767.5 131H782.5M767.5 134.5H782.5M772.5 127.5V138M777.5 127.5V138" stroke="#8a8a8a" stroke-width=".8"/></svg>
<span class="t" style="left:675.0px;top:67.5px;font:38px/42px 'Liberation Sans',sans-serif;color:#c6c6c6;letter-spacing:0.00px;text-shadow:0 1px 1px #333;">A</span>
<svg style="left:0;top:0" width="1920" height="200" viewBox="0 0 1920 200"><path d="M889 84.8H904L899 90.8H884Z" fill="url(#gs)" stroke="#1e1e1e" stroke-width=".5"/><path d="M889 79.2H904L899 85.2H884Z" fill="url(#gs)" stroke="#1e1e1e" stroke-width=".5"/><path d="M889 73.8H904L899 79.8H884Z" fill="url(#gs)" stroke="#1e1e1e" stroke-width=".5"/>
<rect x="900.2" y="86.4" width="12" height="16.6" fill="#1c1c1c" opacity=".55"/><rect x="899.5" y="85.5" width="12" height="16.6" fill="#fbfbfd" stroke="#2a2a2a" stroke-width=".8"/><rect x="901.5" y="87.6" width="5" height="5" fill="#5f86c8" stroke="#274a8c" stroke-width=".6"/><rect x="907.6" y="87.6" width="2" height="5" fill="#b9b9c4"/><path d="M901.5 96H909.5M901.5 99.3H909.5" stroke="#444" stroke-width=".8"/><path d="M903 94.8v2.4M907.6 98.1v2.4" stroke="#444" stroke-width="1.2"/>
<path d="M938.3 75.2C941.4 75.2 943 77.4 943 79.6 943 82.4 940.6 83.2 940.2 85.6H936.4C936 83.2 933.6 82.4 933.6 79.6 933.6 77.4 935.2 75.2 938.3 75.2Z" fill="#ffe9a0" stroke="#c9a23a" stroke-width=".5"/><rect x="936.8" y="86" width="3" height="3.2" fill="#f0f0f0" stroke="#555" stroke-width=".4"/>
<g stroke="#e6e6e6" stroke-width="1"><path d="M957.4 74.2V88.6M950.2 81.4H964.6M952.3 76.3L962.5 86.5M962.5 76.3L952.3 86.5"/></g><circle cx="957.4" cy="81.4" r="4" fill="#ffe28a" stroke="#f6f0d0" stroke-width=".8"/><circle cx="957" cy="81" r="1.8" fill="#fff7d6"/>
<path d="M976.5 82V79.4C976.5 75.4 983.2 75.4 983.2 79.4V80.4" fill="none" stroke="#f2f2f2" stroke-width="1.5"/><rect x="968.8" y="82" width="9.6" height="6.2" fill="#f4df7a" stroke="#8a7420" stroke-width=".6"/><rect x="972.8" y="83.4" width="1.4" height="3.6" fill="#5a4a10"/>
<path d="M935.5 102H944.5L940.5 105.6H931.5Z" fill="url(#gs)" stroke="#1e1e1e" stroke-width=".5"/><circle cx="942.6" cy="107" r="3.3" fill="#bcd9ff" stroke="#7fb0f0" stroke-width=".7"/><rect x="941.8" y="110" width="1.8" height="3.4" fill="#f0f0f0"/>
<path d="M959 106.5H970L966 110.7H955Z" fill="url(#gb)" stroke="#1e1e1e" stroke-width=".5"/><path d="M959 103.0H970L966 107.2H955Z" fill="url(#gs)" stroke="#1e1e1e" stroke-width=".5"/><path d="M959 99.5H970L966 103.7H955Z" fill="url(#gs)" stroke="#1e1e1e" stroke-width=".5"/><path d="M968.6 109L964.4 113.2M964.2 110V113.4H967.6" fill="none" stroke="#c9c9c9" stroke-width="1.1"/>
<path d="M984 102H993L989 105.6H980Z" fill="url(#gs)" stroke="#1e1e1e" stroke-width=".5"/><g stroke="#3b78d8" stroke-width="1.3"><path d="M988.8 104.2V113.6M984.7 106.5L992.9 111.3M992.9 106.5L984.7 111.3"/></g><g stroke="#d7e8ff" stroke-width=".6"><path d="M988.8 105V112.8M985.4 107L992.2 110.8M992.2 107L985.4 110.8"/></g>
<path d="M1008 102.6H1017L1013 106.19999999999999H1004Z" fill="url(#gs)" stroke="#1e1e1e" stroke-width=".5"/><path d="M1011.8 108.4V106.8C1011.8 104.4 1016 104.4 1016 106.8V108.4" fill="none" stroke="#9fd0c4" stroke-width="1.1"/><rect x="1010.6" y="108.4" width="6.6" height="4.8" fill="#6fa79a" stroke="#cfeae2" stroke-width=".6"/>
<path d="M1031 109H1042L1038 113.2H1027Z" fill="url(#gs)" stroke="#1e1e1e" stroke-width=".5"/><path d="M1031 105.5H1042L1038 109.7H1027Z" fill="url(#gs)" stroke="#1e1e1e" stroke-width=".5"/><path d="M1031 102H1042L1038 106.2H1027Z" fill="url(#gb)" stroke="#1e1e1e" stroke-width=".5"/><circle cx="1034.4" cy="100.8" r="2.4" fill="url(#gc)" stroke="#555" stroke-width=".3"/>
<path d="M935 130.6H946L942 134.79999999999998H931Z" fill="url(#gs)" stroke="#1e1e1e" stroke-width=".5"/><path d="M935 127.1H946L942 131.29999999999998H931Z" fill="url(#gs)" stroke="#1e1e1e" stroke-width=".5"/><path d="M935 123.6H946L942 127.8H931Z" fill="url(#gs)" stroke="#1e1e1e" stroke-width=".5"/><circle cx="942.8" cy="131.4" r="3.4" fill="#ffb020" stroke="#ffe7a0" stroke-width=".8"/><circle cx="942.4" cy="130.8" r="1.4" fill="#fff3c4"/><rect x="942" y="134.6" width="1.8" height="3.2" fill="#f0f0f0"/>
<path d="M959 130.6H970L966 134.79999999999998H955Z" fill="url(#gb)" stroke="#1e1e1e" stroke-width=".5"/><path d="M959 127.1H970L966 131.29999999999998H955Z" fill="url(#gs)" stroke="#1e1e1e" stroke-width=".5"/><path d="M959 123.6H970L966 127.8H955Z" fill="url(#gs)" stroke="#1e1e1e" stroke-width=".5"/><path d="M964.2 137.4L968.6 133M965.2 132.8H968.8V136.4" fill="none" stroke="#c9c9c9" stroke-width="1.1"/>
<path d="M983 130.6H994L990 134.79999999999998H979Z" fill="url(#gs)" stroke="#1e1e1e" stroke-width=".5"/><path d="M983 127.1H994L990 131.29999999999998H979Z" fill="url(#gs)" stroke="#1e1e1e" stroke-width=".5"/><path d="M983 123.6H994L990 127.8H979Z" fill="url(#gs)" stroke="#1e1e1e" stroke-width=".5"/><g stroke="#fff2c0" stroke-width="1"><path d="M989.6 126.6V139M983.4 132.8H995.8M985.2 128.4L994 137.2M994 128.4L985.2 137.2"/></g><circle cx="989.6" cy="132.8" r="3.6" fill="#ffc20e" stroke="#ffe79a" stroke-width=".6"/>
<path d="M1008 126.4H1017L1013 130.0H1004Z" fill="url(#gs)" stroke="#1e1e1e" stroke-width=".5"/><path d="M1013.4 133V131.4C1013.4 128.6 1017.8 128.8 1017.6 131.2" fill="none" stroke="#f2c522" stroke-width="1.2"/><rect x="1008.6" y="133.2" width="6.6" height="4.6" fill="#f2b41e" stroke="#7a5a08" stroke-width=".5"/><rect x="1011.4" y="134.4" width="1.2" height="2.2" fill="#5a4008"/>
<path d="M1031 130.6H1042L1038 134.79999999999998H1027Z" fill="url(#gs)" stroke="#1e1e1e" stroke-width=".5"/><path d="M1031 127.1H1042L1038 131.29999999999998H1027Z" fill="url(#gs)" stroke="#1e1e1e" stroke-width=".5"/><path d="M1031 123.6H1042L1038 127.8H1027Z" fill="url(#gs)" stroke="#1e1e1e" stroke-width=".5"/><path d="M1033 134.6L1038 131.8 1040.4 136 1036 138.2Z" fill="#a85a14" stroke="#6a3408" stroke-width=".4"/><path d="M1038.6 132.4L1041.4 129.6" stroke="#e9e9e9" stroke-width="1.4"/>
<path d="M1222.6 73.4H1234.6L1239.4 78.2V93H1222.6Z" fill="url(#gb)" stroke="#e6eefb" stroke-width=".6"/><path d="M1234.6 73.4V78.2H1239.4Z" fill="#eef4ff"/><rect x="1212.3" y="82.6" width="19" height="12.4" fill="#222" opacity=".5"/><rect x="1211.5" y="81.6" width="19" height="12.4" fill="url(#gw)" stroke="#8a8fa0" stroke-width=".4"/><circle cx="1230.6" cy="94.8" r="6.6" fill="#222" opacity=".5"/><circle cx="1230" cy="93.8" r="6.6" fill="url(#gc)" stroke="#8a8fa0" stroke-width=".4"/><path d="M1230 87.6V93.8H1236.4" fill="none" stroke="#b0b4c4" stroke-width=".6"/><rect x="1210.3" y="92.5" width="3.4" height="3.4" fill="#4a4a4a" stroke="#6fa8f5" stroke-width="1"/>
<rect x="1254" y="77.6" width="9.2" height="7.2" fill="url(#gw)" stroke="#333" stroke-width=".4"/><circle cx="1264" cy="85.2" r="3.8" fill="url(#gc)" stroke="#333" stroke-width=".4"/><rect x="1252.3" y="84.3" width="3" height="3" fill="#4a4a4a" stroke="#6fa8f5" stroke-width="1"/>
<rect x="1254" y="103" width="8.4" height="5.8" fill="url(#gw)" stroke="#333" stroke-width=".4"/><circle cx="1261.2" cy="110.2" r="3" fill="url(#gc)" stroke="#333" stroke-width=".4"/><rect x="1252.3" y="108.3" width="2.6" height="2.6" fill="#4a4a4a" stroke="#6fa8f5" stroke-width="1"/><path d="M1266.8 98.6L1262.4 104H1264.8L1263 108.2 1268.4 102.4H1265.6Z" fill="#ffb21e" stroke="#c96a08" stroke-width=".4"/>
<path d="M1252 123.6C1252.6 125.4 1253.6 126 1254.6 126.2" fill="none" stroke="#111" stroke-width=".8"/><path d="M1255 125.8H1266L1266.6 130.6 1261.2 136.6 1255.2 130.4Z" fill="#f8f8f8" stroke="#111" stroke-width=".9"/><path d="M1257.6 129.4L1260.6 132.6 1264.4 127.2" fill="none" stroke="#111" stroke-width="1.3"/><path d="M1261.4 129.8L1266.8 124.2 1268.4 125.8 1263 131.2Z" fill="#f2b632" stroke="#6a4a08" stroke-width=".4"/><path d="M1266.8 124.2L1268 123.2 1269.2 124.6 1268.4 125.8Z" fill="#e0531e"/>
<rect x="1352.6" y="74.4" width="19" height="28.4" fill="#1c1c1c" opacity=".5"/><rect x="1351.6" y="73.5" width="19.4" height="28.5" fill="#fbfbfd" stroke="#cfd2dc" stroke-width=".6"/><rect x="1354.2" y="76.6" width="10.4" height="9.4" fill="#4f7ab8" stroke="#1f3f78" stroke-width=".8"/><rect x="1366" y="76.6" width="2.8" height="9.4" fill="#b5b5c0"/><path d="M1355 91.6H1367M1355 97H1364" stroke="#333" stroke-width=".9"/><path d="M1358 89.4v4.4" stroke="#333" stroke-width="1.4"/>
<path d="M1364.6 96.6L1372.4 92.6 1376 97.4C1374 100.8 1370 102.6 1367 101.6Z" fill="#a85a14" stroke="#5a2c06" stroke-width=".5"/><path d="M1372.8 93L1375 91.2 1377.6 94.6 1375.6 96.4Z" fill="#d8d8d8" stroke="#555" stroke-width=".4"/><path d="M1376 92.6L1380 89.6" stroke="#c9a36a" stroke-width="2"/>
<g transform="translate(1417 80.8)"><path d="M0 0L0-7.3A7.3 7.3 0 0 1 6.32-3.65Z" fill="#f0e040"/><path d="M0 0L6.32-3.65A7.3 7.3 0 0 1 6.32 3.65Z" fill="#f08a30"/><path d="M0 0L6.32 3.65A7.3 7.3 0 0 1 0 7.3Z" fill="#e03050"/><path d="M0 0L0 7.3A7.3 7.3 0 0 1-6.32 3.65Z" fill="#9040d0"/><path d="M0 0L-6.32 3.65A7.3 7.3 0 0 1-6.32-3.65Z" fill="#3a70e0"/><path d="M0 0L-6.32-3.65A7.3 7.3 0 0 1 0-7.3Z" fill="#50c050"/><circle r="7.3" fill="none" stroke="#ddd" stroke-width=".5"/><ellipse cx="-1" cy="-3.4" rx="4.6" ry="2.6" fill="#fff" opacity=".35"/></g>
<rect x="1408.8" y="98.4" width="16.2" height="1.6" fill="#dedede"/><rect x="1408.8" y="103.6" width="16.2" height="2.8" fill="#dedede"/><rect x="1408.8" y="109" width="16.2" height="4" fill="#dedede"/>
<g stroke="#dedede" stroke-width="1"><path d="M1409 123H1425" stroke-dasharray="1.2 1"/><path d="M1409 126H1425" stroke-dasharray="4 1.4"/><path d="M1409 128.8H1425"/><path d="M1409 131.8H1425" stroke-dasharray="5 1.2 1.5 1.2"/><path d="M1409 134.6H1425" stroke-dasharray="3 1.6"/></g>
<rect x="1576.4" y="73.6" width="19" height="31" fill="none" stroke="#e6e6e6" stroke-width="1" stroke-dasharray="2.4 1.4"/><rect x="1580" y="77.6" width="11" height="9.6" fill="#f0e08a" stroke="#111" stroke-width=".9"/><path d="M1588 93.6L1595 86" stroke="#111" stroke-width="2.2"/><path d="M1588 93.6L1595 86" stroke="#e9e9e9" stroke-width="1"/><circle cx="1585" cy="96.6" r="5" fill="url(#gc)" stroke="#111" stroke-width=".9"/>
<g transform="translate(1596.6 84.4)"><path d="M0-11L1.6-2.6 8.6-8 3 -1 11.4 0 3 1.6 8.4 8.8 1.2 3 0 10-1.6 3-7 6.4-3-1.2-10.6 0-3-1.8-5.4-7.6-1-2.6Z" fill="#8fc1f7"/><path d="M0-7.4L1-1.8 6-5.4 2-.6 7.6 0 2 1 5.4 5.6 .8 2 0 6.6-1 2-4.6 4.2-2-.8-7 0-2-1.2-3.6-5-.6-1.8Z" fill="#fff"/></g>
<path d="M1620 75.6H1629M1621.4 75.6V90" stroke="#e6e6e6" stroke-width=".9" stroke-dasharray="1.2 1"/><rect x="1621.8" y="77" width="5.6" height="4.4" fill="#f0e08a" stroke="#111" stroke-width=".7"/><circle cx="1624.2" cy="85.8" r="2.5" fill="url(#gc)" stroke="#111" stroke-width=".7"/><path d="M1628.6 82.2L1634 75.8 1635.2 76.8 1629.8 83.2Z" fill="#f2b632" stroke="#6a4a08" stroke-width=".3"/><path d="M1628 83.6L1629.6 82" stroke="#e0531e" stroke-width="1.4"/>
<rect x="1619.4" y="98.4" width="8.6" height="14.6" fill="none" stroke="#e6e6e6" stroke-width=".9" stroke-dasharray="1.1 1"/><rect x="1621.8" y="100.8" width="3.6" height="3.6" fill="#fafafa" stroke="#111" stroke-width=".5"/><circle cx="1623.6" cy="108.8" r="2" fill="#4f7fd0" stroke="#dfe9fb" stroke-width=".5"/><path d="M1629.6 102.4H1634M1631.8 100.2V104.6M1629.8 107.6H1634" stroke="#e6e6e6" stroke-width=".9"/>
<defs><linearGradient id="hl" x1="0" y1="0" x2="0" y2="1"><stop offset="0" stop-color="#8eaadb"/><stop offset="1" stop-color="#46639c"/></linearGradient></defs><rect x="1615.5" y="119.8" width="23.2" height="20.8" fill="url(#hl)" stroke="#22396a" stroke-width="1"/><rect x="1619.4" y="122" width="8.6" height="15" fill="none" stroke="#2f6be0" stroke-width=".9" stroke-dasharray="1.1 1"/><rect x="1621.8" y="124.8" width="3.6" height="3.6" fill="#f0e08a" stroke="#333" stroke-width=".4"/><rect x="1621.8" y="130.8" width="3.6" height="3.6" fill="#eef" stroke="#333" stroke-width=".4"/><path d="M1628.2 124.6L1634.4 131.4 1631.6 131.4 1633 135.2 1631.6 135.8 1630.2 132.2 1628.2 134Z" fill="#f2d632" stroke="#222" stroke-width=".5"/>
<path d="M1667.4 81V90M1695.6 81V90M1668.4 85.6H1694.6" stroke="#f0f0f0" stroke-width="1"/><path d="M1668.2 85.6l3.4-2v4zM1694.8 85.6l-3.4-2v4z" fill="#f0f0f0"/><rect x="1667.2" y="92.4" width="28.6" height="5.6" fill="#f2c522" stroke="#a86a08" stroke-width=".7"/><path d="M1669 92.6v2M1671.4 92.6v1.4M1673.8 92.6v2M1676.2 92.6v1.4M1678.6 92.6v2M1681 92.6v1.4M1683.4 92.6v2M1685.8 92.6v1.4M1688.2 92.6v2M1690.6 92.6v1.4M1693 92.6v2" stroke="#8a5a08" stroke-width=".6"/>
<path d="M1724.8 80.4H1729.6M1733.6 80.4H1737M1731.6 74V78.4M1731.6 82.4V86.6" stroke="#f0f0f0" stroke-width="1"/><rect x="1729.8" y="78.6" width="3.6" height="3.6" fill="none" stroke="#f0f0f0" stroke-width="1"/><path d="M1740.6 73.6L1736.6 78.2H1738.8L1737.2 81.8 1741.8 77H1739.4Z" fill="#ffb21e" stroke="#c96a08" stroke-width=".3"/><rect x="1734" y="83.6" width="6.4" height="6.2" fill="#fafafa" stroke="#222" stroke-width=".6"/><path d="M1734 85.8H1740.4M1734 87.8H1740.4M1736.2 85.8V89.8M1738.2 85.8V89.8" stroke="#444" stroke-width=".5"/>
<path d="M1725 105.8H1739.6M1732.3 98.4V113.2" stroke="#f0f0f0" stroke-width="1"/><circle cx="1732.3" cy="105.8" r="2.2" fill="none" stroke="#d0d0d0" stroke-width=".9"/>
<rect x="1727.4" y="123.4" width="10.4" height="13.2" rx="1" fill="#f6f6f6" stroke="#222" stroke-width=".8"/><rect x="1729" y="125" width="7.2" height="2.8" fill="#7a8088"/><g fill="#444"><rect x="1729" y="129.4" width="1.6" height="1.4"/><rect x="1731.8" y="129.4" width="1.6" height="1.4"/><rect x="1734.6" y="129.4" width="1.6" height="1.4"/><rect x="1729" y="131.8" width="1.6" height="1.4"/><rect x="1731.8" y="131.8" width="1.6" height="1.4"/><rect x="1734.6" y="131.8" width="1.6" height="1.4"/><rect x="1729" y="134.2" width="1.6" height="1.4"/><rect x="1731.8" y="134.2" width="1.6" height="1.4"/><rect x="1734.6" y="134.2" width="1.6" height="1.4"/></g>
<defs><linearGradient id="cb" x1="0" y1="0" x2="1" y2="0"><stop offset="0" stop-color="#c9c0b3"/><stop offset="1" stop-color="#8e8477"/></linearGradient></defs><rect x="1773.6" y="75.6" width="21" height="24" rx="1.4" fill="url(#cb)" stroke="#3a342c" stroke-width=".7"/><path d="M1779 77.4V75.4C1779 74 1789 74 1789 75.4V77.4Z" fill="#f2f2f2" stroke="#444" stroke-width=".5"/><rect x="1782.2" y="83" width="15.6" height="20" fill="#1a1a1a" opacity=".45"/><path d="M1781.2 81.8H1792.4L1797.2 86.6V102.2H1781.2Z" fill="url(#gw)" stroke="#9a9eb0" stroke-width=".4"/><path d="M1792.4 81.8V86.6H1797.2Z" fill="#d9dce8"/>
<path d="M1827.4 75.6L1836.6 85.4M1838.6 75.6L1829.4 85.4" stroke="#f2f2f2" stroke-width="1.3"/><circle cx="1828.6" cy="87" r="1.9" fill="none" stroke="#222" stroke-width="1.1"/><circle cx="1837.4" cy="87" r="1.9" fill="none" stroke="#222" stroke-width="1.1"/>
<path d="M1826.2 99H1832.4L1835 101.6V109.6H1826.2Z" fill="url(#gw)" stroke="#444" stroke-width=".5"/><path d="M1830.4 102.6H1836.6L1839.6 105.6V113.4H1830.4Z" fill="url(#gw)" stroke="#444" stroke-width=".5"/>
<path d="M1871 80.6H1880.6V85.6H1895V98.6H1871Z" fill="#1c1c1c" opacity=".5"/><path d="M1870 79.4H1879.6V84.4H1894.4V97.4H1870Z" fill="url(#gw)"/></svg>
<svg style="left:0;top:164px" width="320" height="30" viewBox="0 164 320 30">
<defs><linearGradient id="ti" x1="0" y1="0" x2="0" y2="1"><stop offset="0" stop-color="#5b5b5b"/><stop offset="1" stop-color="#474747"/></linearGradient>
<linearGradient id="ta" x1="0" y1="0" x2="0" y2="1"><stop offset="0" stop-color="#6e6e6e"/><stop offset="1" stop-color="#5a5a5a"/></linearGradient></defs>
<path d="M8 190.5C17 190.5 19 186 21 180C23 173 25 168.5 33 168.5H134C141 168.5 142 173 143 179C144 186 146 190.5 154 190.5Z" fill="url(#ti)"/>
<path d="M134 190.5C143 190.5 145 186 147 180C149 173 151 168.5 159 168.5H256C264 168.5 266 173 268 180C270 186 272 190.5 282 190.5Z" fill="url(#ta)"/>
<path d="M275 172.5H288C294 172.5 297 178 297.5 187.5H284C278 187.5 275.5 181 275 172.5Z" fill="#4f4f4f"/>
<path d="M282 180H290M286 176V184" stroke="#d6d6d6" stroke-width="1.7"/>
<path d="M248 177L254 183M254 177L248 183" stroke="#3c3c3c" stroke-width="1.8"/>
</svg>
<span class="t" style="left:32.0px;top:171.5px;font:12px/16px 'Liberation Sans',sans-serif;color:#bdbdbd;letter-spacing:0.04px;">Начало</span>
<span class="t" style="left:155.0px;top:171.5px;font:12px/16px 'Liberation Sans',sans-serif;color:#f4f4f4;letter-spacing:-0.06px;">Станок ЧПУ1*</span>
<span class="t" style="left:3.7px;top:200.5px;font:bold 11px/15px 'Liberation Sans',sans-serif;color:#161616;letter-spacing:0.20px;">[−][Сверху][2D-каркас]</span>
<span class="t" style="left:21px;top:929px;width:15px;text-align:center;font:17.5px/20px 'Liberation Sans',sans-serif;color:#2a2a2a">Y</span>
<span class="t" style="left:74px;top:983px;width:15px;text-align:center;font:17.5px/20px 'Liberation Sans',sans-serif;color:#2a2a2a">X</span>
<svg style="left:0;top:194px" width="1912" height="827" viewBox="0 194 1912 827"><g fill="none" stroke="#000" stroke-width="1">
<rect x="750.5" y="266.5" width="278" height="157"/>
<rect x="378.5" y="562.5" width="173" height="270.5"/>
<rect x="878.5" y="575.5" width="127" height="175"/>
<path d="M750.5 298.5H631.5V655.5H551.5"/>
<path d="M750.5 328.5H656.5V592L551.5 590.5"/>
<path d="M750.5 367.5H679.5V679.5H878.5M679.5 679.5L551.5 713.5"/>
<path d="M750.5 403.5H703.5V714H878.5"/>
<path d="M551.5 740.5L803.5 743.5L878.5 714"/>
<path d="M551.5 623A30 30 0 0 1 551.5 683"/>
<path d="M551.5 683A28.8 28.8 0 1 1 551.5 740.5"/>
<circle cx="750.5" cy="298.5" r="2.3"/>
<circle cx="750.5" cy="328.5" r="2.3"/>
<circle cx="750.5" cy="367.2" r="2.3"/>
<circle cx="750.5" cy="400.5" r="2.3"/>
<circle cx="551.5" cy="590.5" r="2.3"/>
<circle cx="551.5" cy="623" r="2.3"/>
<circle cx="551.5" cy="655.5" r="2.3"/>
<circle cx="551.5" cy="683" r="2.3"/>
<circle cx="551.5" cy="713.5" r="2.3"/>
<circle cx="551.5" cy="740.5" r="2.3"/>
<circle cx="878.5" cy="679.5" r="2.3"/>
<circle cx="878.5" cy="714" r="2.3"/>
</g>
<g font-family="'Liberation Mono',monospace" font-size="15.3" fill="#222">
<text x="771.8" y="304.2" textLength="56.6" lengthAdjust="spacing">STEP X</text>
<text x="771.8" y="334.8" textLength="44.6" lengthAdjust="spacing">DIR X</text>
<text x="776.5" y="372.0" textLength="31.9" lengthAdjust="spacing">5V-</text>
<text x="776.5" y="405.9" textLength="31.9" lengthAdjust="spacing">5V+</text>
<text x="922.7" y="338.4" textLength="86.2" lengthAdjust="spacing">ОПТОПЛАТА</text>
<text x="489.2" y="597.2" textLength="32.3" lengthAdjust="spacing">DIR-</text>
<text x="488.1" y="627.9" textLength="33.4" lengthAdjust="spacing">DIR+</text>
<text x="492.9" y="660.3" textLength="36.6" lengthAdjust="spacing">PUL-</text>
<text x="491.4" y="687.0" textLength="37.3" lengthAdjust="spacing">PUL+</text>
<text x="491.1" y="719.0" textLength="37.6" lengthAdjust="spacing">ENA-</text>
<text x="493.3" y="744.9" textLength="37.6" lengthAdjust="spacing">ENA+</text>
<text x="935.8" y="618.7" textLength="54.9" lengthAdjust="spacing">S-30-5</text>
<text x="889.5" y="685.0" textLength="21.0" lengthAdjust="spacing">V-</text>
<text x="889.5" y="719.4" textLength="21.0" lengthAdjust="spacing">V+</text>
</g>
<g fill="none" stroke="#000" stroke-width="1"><rect x="16.5" y="995.5" width="9" height="9"/><path d="M20.5 995.5V950.5M25.5 1000.5H70.5"/></g>
<g fill="none" stroke="#000" stroke-width="1"><path d="M1759 645.5H1803M1811 645.5H1856M1807.5 597V641M1807.5 649V693"/><rect x="1803.5" y="641.5" width="8" height="8"/></g></svg>
<svg style="left:1760px;top:206px" width="140" height="140" viewBox="1760 206 140 140"><circle cx="1829" cy="276" r="53.5" fill="none" stroke="#fafafa" stroke-width="14"/></svg>
<div style="left:1803px;top:250px;width:52px;height:52px;background:#efefef;border:1px solid #9c9c9c;box-sizing:border-box"></div>
<div style="left:1813px;top:260px;width:32px;height:32px;background:#e1e3e8"></div>
<span class="t" style="left:1815.7px;top:266.5px;font:13px/17px 'Liberation Sans',sans-serif;color:#9a9ea6;letter-spacing:-1.07px;transform:scaleY(1.3);">Верх</span>
<span class="t" style="left:1813.7px;top:207px;width:30px;text-align:center;font:21px/26px 'Liberation Sans',sans-serif;color:#fbfbfb;-webkit-text-stroke:1px #b9b9b9">С</span>
<span class="t" style="left:1757.6px;top:263.5px;width:30px;text-align:center;font:21px/26px 'Liberation Sans',sans-serif;color:#fbfbfb;-webkit-text-stroke:1px #b9b9b9">З</span>
<span class="t" style="left:1870px;top:263.5px;width:30px;text-align:center;font:21px/26px 'Liberation Sans',sans-serif;color:#fbfbfb;-webkit-text-stroke:1px #b9b9b9">В</span>
<span class="t" style="left:1814px;top:320px;width:30px;text-align:center;font:21px/26px 'Liberation Sans',sans-serif;color:#fbfbfb;-webkit-text-stroke:1px #b9b9b9">Ю</span>
<div style="left:1805px;top:364px;width:47px;height:17px;background:#e9e9f4;border-radius:4px"></div>
<span class="t" style="left:1809.6px;top:364.5px;font:10px/14px 'Liberation Sans',sans-serif;color:#8a8a94;letter-spacing:0.26px;">МСК</span>
<svg style="left:1838px;top:368px;" width="10" height="8" viewBox="0 0 10 8"><path d="M.8 1H9.2L5 7Z" fill="none" stroke="#a2a2ae" stroke-width="1"/></svg>
<svg style="left:1870px;top:400px" width="45" height="224" viewBox="1870 400 45 224">
<rect x="1875" y="405" width="34.5" height="214" rx="4" fill="#f5f5f5" stroke="#c6c6c6" stroke-width="1.6"/>
<g fill="none" stroke="#d9d9d9" stroke-width="1.1">
<circle cx="1902" cy="411" r="3.2"/><path d="M1900 409l4 4m0-4l-4 4"/>
<path d="M1881 431C1881 426 1885 424.5 1892 424.5H1902.5V436C1902.5 443 1898 447 1892 447 1885 447 1881 443 1881 436Z"/><circle cx="1892" cy="436" r="5.6"/><circle cx="1892" cy="436" r="9"/>
<path d="M1878 462.5H1906M1878 570H1906"/>
<path d="M1884 480C1881 476 1880.5 475 1882 474.5 1884 474 1886 477 1887 479L1886.4 470C1886.4 468 1888.4 468 1888.8 470L1889.4 476 1889.8 468.4C1890 466.4 1892.2 466.6 1892.2 468.6L1892.2 476 1893.4 469.4C1893.8 467.6 1895.8 468 1895.6 469.8L1895 477 1897.2 472C1898 470.4 1899.8 471.2 1899.2 473L1897 482C1896.4 486 1894 488 1890.6 488 1887 488 1886 484.4 1884 480Z"/>
<path d="M1881 496L1896 511M1896 496L1881 511M1881 496h4m-4 0v4M1896 496h-4m4 0v4M1881 511h4m-4 0v-4"/><circle cx="1897.5" cy="510.5" r="4.2" fill="#f5f5f5"/><path d="M1900.5 513.5L1904 517" stroke-width="2"/>
<ellipse cx="1892" cy="546" rx="11" ry="4.4"/><path d="M1889.6 553V540H1886.6L1892 533.6 1897.4 540H1894.4V553Z" fill="#f5f5f5"/><path d="M1885 547l-3.4 2.6 4 1.6"/>
<rect x="1880.6" y="575.6" width="5.6" height="5.6"/><rect x="1888.8" y="575.6" width="5.6" height="5.6"/><rect x="1897" y="575.6" width="5.6" height="5.6"/>
<rect x="1880.6" y="584.4" width="15.8" height="12.6"/>
<circle cx="1902" cy="611.4" r="3.2"/><path d="M1899 611.4h6"/>
</g><g fill="#d9d9d9"><path d="M1889.6 454.6h4.8l-2.4 2.6zM1889.6 524.6h4.8l-2.4 2.6zM1889.6 562.8h4.8l-2.4 2.6zM1885 587v7.6l7-3.8z"/></g></svg>
<div style="left:711px;top:994px;width:497px;height:27px;background:#fff;border:1px solid #9a9a9a;border-radius:3px;box-sizing:border-box;box-shadow:0 0 2px rgba(0,0,0,.25)"></div>
<div style="left:712px;top:995px;width:53px;height:25px;background:linear-gradient(#a3a3a3,#8a8a8a 50%,#7c7c7c);border-radius:2px 0 0 2px"></div>
<svg style="left:712px;top:995px" width="54" height="25" viewBox="712 995 54 25"><g fill="#d6d6d6"><rect x="715" y="998.0" width="1.4" height="1.4"/><rect x="717.6" y="998.0" width="1.4" height="1.4"/><rect x="715" y="1000.6" width="1.4" height="1.4"/><rect x="717.6" y="1000.6" width="1.4" height="1.4"/><rect x="715" y="1003.2" width="1.4" height="1.4"/><rect x="717.6" y="1003.2" width="1.4" height="1.4"/><rect x="715" y="1005.8" width="1.4" height="1.4"/><rect x="717.6" y="1005.8" width="1.4" height="1.4"/><rect x="715" y="1008.4" width="1.4" height="1.4"/><rect x="717.6" y="1008.4" width="1.4" height="1.4"/><rect x="715" y="1011.0" width="1.4" height="1.4"/><rect x="717.6" y="1011.0" width="1.4" height="1.4"/><rect x="715" y="1013.6" width="1.4" height="1.4"/><rect x="717.6" y="1013.6" width="1.4" height="1.4"/><rect x="715" y="1016.2" width="1.4" height="1.4"/><rect x="717.6" y="1016.2" width="1.4" height="1.4"/></g><path d="M727 1003L735 1011M735 1003L727 1011" stroke="#fff" stroke-width="2"/><path d="M746.5 1003.5A3.6 3.6 0 1 0 751 1008L758 1014.6 759.6 1013 752.6 1006.4A3.6 3.6 0 0 0 749.6 1001.4L750.6 1004.4 748.8 1006.2Z" fill="#fff" stroke="#444" stroke-width=".5"/></svg>
<svg style="left:770px;top:1000px;" width="15" height="14" viewBox="0 0 15 14"><rect x=".5" y=".5" width="14" height="13" rx="1.5" fill="#e2e4ee" stroke="#8a8e9e"/><path d="M3 4L6.5 6.8 3 9.6" fill="none" stroke="#444" stroke-width="1.1"/><path d="M7.5 10.5H11.5" stroke="#444" stroke-width="1"/></svg>
<svg style="left:788.0px;top:1005.0px" width="6" height="3" viewBox="0 0 6 3"><path d="M0 0H6L3.0 3Z" fill="#8a8a8a"/></svg>
<span class="t" style="left:801.0px;top:999.5px;font:italic 12px/16px 'Liberation Mono',monospace;color:#a8a8a8;letter-spacing:-0.29px;">Введите команду</span>
<svg style="left:1196px;top:1004px;" width="8" height="5" viewBox="0 0 8 5"><path d="M0 5H8L4 0Z" fill="#333"/></svg>
<svg style="left:0;top:1021px" width="180" height="20" viewBox="0 1021 180 20">
<defs><linearGradient id="lm" x1="0" y1="0" x2="0" y2="1"><stop offset="0" stop-color="#5a5a5a"/><stop offset="1" stop-color="#727272"/></linearGradient></defs>
<path d="M81.5 1021.5H138.5C135 1022.5 134 1027 133 1031C132 1036 130 1038 125 1038H94C89 1038 88 1036 87 1031C86 1027 85 1022.5 81.5 1021.5Z" fill="#4b4b4b"/>
<path d="M6 1021.5H83C79.5 1022.5 78.5 1027 77.5 1031C76.5 1036 74.5 1038 69.5 1038H23C18 1038 16 1036 14.5 1031C13 1027 11 1022.5 6 1021.5Z" fill="url(#lm)"/>
<path d="M147 1022.7H162.5C162 1030 160 1036.8 154 1036.8H139.5C140 1029 142 1022.7 147 1022.7Z" fill="#4b4b4b"/>
<path d="M146.6 1030.2H154.6M150.6 1026.2V1034.2" stroke="#e4e4e4" stroke-width="1.8"/></svg>
<span class="t" style="left:23.3px;top:1021.7px;font:bold 12px/16px 'Liberation Sans',sans-serif;color:#ffffff;letter-spacing:-0.19px;">Модель</span>
<span class="t" style="left:92.3px;top:1021.7px;font:12px/16px 'Liberation Sans',sans-serif;color:#bdbdbd;letter-spacing:-0.51px;">Лист1</span>
<div style="left:1289px;top:1021px;width:631px;height:29px;background:#4b4b4b"></div>
<div class="sb" style="left:1290px;top:1022.5px;width:58px;height:25px;"></div>
<div class="sb" style="left:1349px;top:1022.5px;width:65px;height:25px;"></div>
<div class="sb" style="left:1415px;top:1022.5px;width:103px;height:25px;"></div>
<div class="sb" style="left:1519px;top:1022.5px;width:64px;height:25px;"></div>
<div class="sb" style="left:1584px;top:1022.5px;width:111px;height:25px;"></div>
<div class="sb" style="left:1696px;top:1022.5px;width:41px;height:25px;"></div>
<div class="sb" style="left:1737px;top:1022.5px;width:25px;height:25px;"></div>
<div class="sb" style="left:1763px;top:1022.5px;width:26px;height:25px;"></div>
<div class="sb" style="left:1790px;top:1022.5px;width:26px;height:25px;"></div>
<div class="sb" style="left:1817px;top:1022.5px;width:51px;height:25px;"></div>
<div class="sb" style="left:1869px;top:1022.5px;width:52px;height:25px;"></div>
<span class="t" style="left:1294.7px;top:1026.1px;font:12px/16px 'Liberation Sans',sans-serif;color:#fafafa;letter-spacing:-0.39px;">МОДЕЛЬ</span>
<svg style="left:1280px;top:1021px" width="640" height="29" viewBox="1280 1021 640 29"><g stroke="#cfcfcf" stroke-width="1"><path d="M1356.5 1027.5V1041M1359.5 1027.5V1041M1362.5 1027.5V1041M1365.5 1027.5V1041M1368.5 1027.5V1041"/><path d="M1354.5 1029.5H1369.5M1354.5 1032.5H1369.5M1354.5 1035.5H1369.5M1354.5 1038.5H1369.5" stroke-dasharray="1 2"/></g>
<g stroke="#cfcfcf" stroke-width="1" stroke-dasharray="1 2"><path d="M1378.5 1028.5H1393M1378.5 1031.5H1393M1378.5 1034.5H1393M1378.5 1037.5H1393M1378.5 1040.5H1393"/></g>
<path d="M1422.5 1029.5V1040.5H1435M1422.5 1036.5H1426.5V1040.5" fill="none" stroke="#cfcfcf" stroke-width="1.2"/>
<circle cx="1451.7" cy="1034.6" r="6.4" fill="none" stroke="#cfcfcf" stroke-width="1.2"/><path d="M1451.7 1034.6H1460.5M1451.7 1034.6L1457.4 1028" stroke="#cfcfcf" stroke-width="1.2"/>
<path d="M1491.5 1025.5V1044M1483.5 1026.5L1499.5 1042.5" stroke="#cfcfcf" stroke-width="1.2"/><circle cx="1491.5" cy="1034.5" r="1.3" fill="#cfcfcf"/>
<path d="M1523 1041.5H1539.5M1524 1041L1536 1030" stroke="#cfcfcf" stroke-width="1.2"/><rect x="1528.2" y="1034" width="3" height="3" fill="#cfcfcf"/>
<rect x="1549.7" y="1029" width="12.6" height="12.6" fill="none" stroke="#2f8af5" stroke-width="1.6" rx="1"/><rect x="1549" y="1028.3" width="3.6" height="3.6" fill="#22d422" stroke="#000" stroke-width=".8"/>
<path d="M1596.5 1026L1598.5 1034L1604.9 1042.6L1597.9 1039L1596.5 1043.4L1595.1 1039L1588.1 1042.6L1594.5 1034Z" fill="#2f8af5"/><circle cx="1601.5" cy="1029.6" r="2.6" fill="#4b4b4b" stroke="#2f8af5" stroke-width="1.2"/>
<path d="M1620.5 1026L1622.5 1034L1628.9 1042.6L1621.9 1039L1620.5 1043.4L1619.1 1039L1612.1 1042.6L1618.5 1034Z" fill="#b9b9b9"/><path d="M1626.6 1026.6L1623.2 1031H1625.2L1623.6 1035 1628 1030H1625.8Z" fill="#4b4b4b" stroke="#b9b9b9" stroke-width=".7"/>
<path d="M1645 1026L1647 1034L1653.4 1042.6L1646.4 1039L1645 1043.4L1643.6 1039L1636.6 1042.6L1643 1034Z" fill="#b9b9b9"/>
<g fill="#c6c6c6"><circle cx="1709" cy="1034.6" r="5.2"/><g transform="rotate(0 1709 1034.6)"><rect x="1707.6" y="1027.8" width="2.8" height="3"/><rect x="1707.6" y="1038.4" width="2.8" height="3"/></g><g transform="rotate(45 1709 1034.6)"><rect x="1707.6" y="1027.8" width="2.8" height="3"/><rect x="1707.6" y="1038.4" width="2.8" height="3"/></g><g transform="rotate(90 1709 1034.6)"><rect x="1707.6" y="1027.8" width="2.8" height="3"/><rect x="1707.6" y="1038.4" width="2.8" height="3"/></g><g transform="rotate(135 1709 1034.6)"><rect x="1707.6" y="1027.8" width="2.8" height="3"/><rect x="1707.6" y="1038.4" width="2.8" height="3"/></g></g><circle cx="1709" cy="1034.6" r="2.2" fill="#4b4b4b"/>
<path d="M1742 1034.6H1756M1749 1027.6V1041.6" stroke="#dedede" stroke-width="1.8"/>
<rect x="1768.6" y="1027.5" width="6" height="6" fill="none" stroke="#cfcfcf" stroke-width="1.1"/><circle cx="1780" cy="1033.6" r="3" fill="none" stroke="#cfcfcf" stroke-width="1.1"/><path d="M1774 1036.2L1777.4 1041.4H1770.6Z" fill="none" stroke="#cfcfcf" stroke-width="1.1"/>
<circle cx="1803" cy="1034.6" r="8.2" fill="#0a3f86" stroke="#1f7bf2" stroke-width="1.8"/><path d="M1802.4 1036.6L1806.6 1033" stroke="#7fb6ff" stroke-width="1.2"/>
<rect x="1823.5" y="1027.5" width="18" height="15" fill="#f4f4f4" stroke="#111" stroke-width="1" rx="1"/><path d="M1824.5 1041.5C1827.5 1041 1828.5 1030 1832 1030C1835.5 1030 1836 1041 1840.5 1041.5" fill="none" stroke="#222" stroke-width="1"/><path d="M1839.4 1036.2L1843.4 1043.6H1835.4Z" fill="#f0641e" stroke="#fff" stroke-width=".5"/>
<path d="M1849 1029H1859L1862 1032V1042H1849Z" fill="#3f78c8" stroke="#ddd" stroke-width=".5"/><rect x="1849" y="1036" width="13" height="6" fill="#f2d01e"/><path d="M1850.6 1027.4V1033M1848.6 1030H1856" stroke="#e8e8e8" stroke-width="1"/><circle cx="1850.6" cy="1030" r="1.6" fill="#4b4b4b" stroke="#e8e8e8" stroke-width=".8"/><path d="M1854.6 1038.6L1857.6 1041.6 1863.4 1035.4" fill="none" stroke="#1fb41f" stroke-width="1.8"/>
<rect x="1874.5" y="1029.5" width="15.5" height="11" fill="none" stroke="#cfcfcf" stroke-width="1.2"/><path d="M1877.4 1038L1881 1034.6M1877.2 1035V1038.2H1880.6M1883.4 1035.4L1887 1032M1883.8 1031.8H1887.2V1035" fill="none" stroke="#cfcfcf" stroke-width="1.2"/>
<path d="M1898.7 1029.8H1914.3M1898.7 1034.6H1914.3M1898.7 1039.4H1914.3" stroke="#dedede" stroke-width="2"/></svg>
<span class="t" style="left:1662.7px;top:1026.1px;font:12px/16px 'Liberation Sans',sans-serif;color:#fafafa;letter-spacing:-0.54px;">1:1</span>
<svg style="left:1401.3px;top:1033.0px" width="8" height="4" viewBox="0 0 8 4"><path d="M0 0H8L4.0 4Z" fill="#f0f0f0"/></svg>
<svg style="left:1467.3px;top:1033.0px" width="8" height="4" viewBox="0 0 8 4"><path d="M0 0H8L4.0 4Z" fill="#f0f0f0"/></svg>
<svg style="left:1506.5px;top:1033.0px" width="8" height="4" viewBox="0 0 8 4"><path d="M0 0H8L4.0 4Z" fill="#f0f0f0"/></svg>
<svg style="left:1570.7px;top:1033.0px" width="8" height="4" viewBox="0 0 8 4"><path d="M0 0H8L4.0 4Z" fill="#f0f0f0"/></svg>
<svg style="left:1682.8px;top:1033.0px" width="8" height="4" viewBox="0 0 8 4"><path d="M0 0H8L4.0 4Z" fill="#f0f0f0"/></svg>
<svg style="left:1724.4px;top:1033.0px" width="8" height="4" viewBox="0 0 8 4"><path d="M0 0H8L4.0 4Z" fill="#f0f0f0"/></svg>
<div style="left:60px;top:1050px;width:42px;height:31px;background:linear-gradient(rgba(170,190,215,.45) 0,rgba(120,145,175,.28) 48%,rgba(50,75,105,.3) 52%,rgba(80,110,145,.35) 100%);border:1px solid rgba(15,25,40,.85);box-shadow:inset 0 0 0 1px rgba(200,218,238,.55);border-radius:3px;box-sizing:border-box"></div>
<div style="left:152px;top:1050px;width:42px;height:31px;background:linear-gradient(#e8606a 0,#d43a46 48%,#c4202c 52%,#d84450 100%);border:1px solid rgba(40,10,15,.85);box-shadow:inset 0 0 0 1px rgba(255,190,195,.6);border-radius:3px;box-sizing:border-box"></div>
<div style="left:198px;top:1050px;width:42px;height:31px;background:linear-gradient(#dfe5ec 0,#b9c3cf 48%,#93a2b4 52%,#b4c0ce 100%);border:1px solid rgba(20,30,45,.85);box-shadow:inset 0 0 0 1px rgba(255,255,255,.7);border-radius:3px;box-sizing:border-box"></div>
<div style="left:290px;top:1050px;width:42px;height:31px;background:linear-gradient(rgba(170,190,215,.45) 0,rgba(120,145,175,.28) 48%,rgba(50,75,105,.3) 52%,rgba(80,110,145,.35) 100%);border:1px solid rgba(15,25,40,.85);box-shadow:inset 0 0 0 1px rgba(200,218,238,.55);border-radius:3px;box-sizing:border-box"></div>
<div style="left:336px;top:1050px;width:42px;height:31px;background:linear-gradient(rgba(170,190,215,.45) 0,rgba(120,145,175,.28) 48%,rgba(50,75,105,.3) 52%,rgba(80,110,145,.35) 100%);border:1px solid rgba(15,25,40,.85);box-shadow:inset 0 0 0 1px rgba(200,218,238,.55);border-radius:3px;box-sizing:border-box"></div>
<svg style="left:0;top:1044px" width="1920" height="36" viewBox="0 1044 1920 36"><defs><radialGradient id="orb" cx=".42" cy=".25" r=".8"><stop offset="0" stop-color="#8ccbf5"/><stop offset=".4" stop-color="#2f7ec2"/><stop offset="1" stop-color="#0b3f78"/></radialGradient><radialGradient id="orbg" cx=".5" cy=".5" r=".5"><stop offset="0" stop-color="#55e0ff" stop-opacity=".95"/><stop offset="1" stop-color="#30b8f0" stop-opacity="0"/></radialGradient></defs><circle cx="27" cy="1064" r="19" fill="#0a1c30"/><circle cx="27" cy="1064" r="17.8" fill="url(#orb)" stroke="#8fc0ea" stroke-width="1"/><ellipse cx="27" cy="1079" rx="14" ry="8" fill="url(#orbg)"/><ellipse cx="24" cy="1053.5" rx="11" ry="6" fill="#fff" opacity=".22"/>
<path d="M18.4 1053.6C21.8 1051.6 24.8 1051.8 27.6 1053.4L25.8 1060.8C23.2 1059.2 20.2 1059 16.6 1061Z" fill="#f0602c"/><path d="M29 1054.2C32 1055.8 35 1055.8 38.6 1054L36.8 1061.4C33.2 1063.2 30.2 1063 27.2 1061.6Z" fill="#8cc63e"/><path d="M16.2 1062.6C19.8 1060.6 22.8 1060.8 25.4 1062.4L23.6 1069.8C21 1068.2 18 1068 14.4 1070Z" fill="#3fa0ee"/><path d="M26.8 1063.2C29.8 1064.6 32.8 1064.8 36.4 1062.8L34.6 1070.2C31 1072 28 1071.8 25 1070.4Z" fill="#fbc02a"/>
<path d="M73.5 1059H79.5L81 1060.6H88.8V1072H73.5Z" fill="#efd070" stroke="#b8922a" stroke-width=".5"/><rect x="75" y="1060" width="4" height="1.2" fill="#4fc04f"/><rect x="75" y="1061.4" width="12.4" height="3" fill="#fafafa"/><path d="M73.5 1063H88.8V1072H73.5Z" fill="#f5dc88" stroke="#b8922a" stroke-width=".5"/><path d="M75.6 1066.4H86.8V1072.8H83.4V1069.8H79V1072.8H75.6Z" fill="#58aef0" stroke="#2a7cc8" stroke-width=".6"/>
<path d="M120.6 1057.6L126.7 1055.6 132.8 1057.6V1067.6L126.7 1073.4 120.6 1067.6Z" fill="#1c1c1c" stroke="#d8d8d8" stroke-width="1.2"/><path d="M122.8 1060H130.6M124.6 1060V1066M126.7 1060V1069.6M128.8 1060V1066" stroke="#f0f0f0" stroke-width="1.3"/>
<ellipse cx="173.4" cy="1065" rx="8.1" ry="8.9" fill="#f0202a"/><ellipse cx="174.4" cy="1065" rx="4" ry="6.6" fill="#cf3a44"/><path d="M168 1060C170 1057 174 1056.4 177 1058" fill="none" stroke="#ff8a90" stroke-width="1" opacity=".7"/>
<rect x="210.5" y="1057" width="17" height="17" fill="#f0e9e9"/>
<rect x="259" y="1057" width="11.4" height="16" rx="1" fill="#eaf3fc" stroke="#4f8fd4" stroke-width=".8"/><rect x="260.4" y="1058.6" width="8.6" height="3.4" fill="#f6b04a"/><g fill="#4f8fd4"><rect x="260.4" y="1063.4" width="2" height="1.8"/><rect x="263.7" y="1063.4" width="2" height="1.8"/><rect x="267" y="1063.4" width="2" height="1.8"/><rect x="260.4" y="1066.4" width="2" height="1.8"/><rect x="263.7" y="1066.4" width="2" height="1.8"/><rect x="267" y="1066.4" width="2" height="1.8"/><rect x="260.4" y="1069.4" width="2" height="1.8"/><rect x="263.7" y="1069.4" width="2" height="1.8"/><rect x="267" y="1069.4" width="2" height="1.8"/></g>
<path d="M310.8 1056.6L316.6 1071H305Z" fill="#f58a1e"/><path d="M308.9 1061.4H312.7L313.8 1064.2H307.8Z" fill="#fff"/><path d="M306.8 1066.8H314.8L315.8 1069.2H305.8Z" fill="#fff"/><path d="M303.8 1070.4H317.8L318.6 1073.6H303Z" fill="#f57a10" stroke="#b85a08" stroke-width=".4"/>
<rect x="350.5" y="1058.5" width="14" height="11.5" fill="#f4f8fc" stroke="#5a86b8" stroke-width=".8"/><rect x="352" y="1060" width="11" height="8.4" fill="#6fb0e8"/><path d="M352 1068.4L356 1063.6 359 1066.4 361 1064.8 363 1068.4Z" fill="#4a9a3a"/><path d="M349 1060V1057.4H352M366 1060V1057.4H363M349 1068.6V1071.4H352M366 1068.6V1071.4H363" fill="none" stroke="#2f7ad8" stroke-width="1.3"/>
<path d="M1713.6 1068.6H1720.4L1717 1064.6Z" fill="#fff"/>
<circle cx="1741.6" cy="1066" r="7" fill="#e8d21e" stroke="#fff8a0" stroke-width=".8"/><circle cx="1741.6" cy="1066" r="4.6" fill="#2fae2f"/><path d="M1738.8 1066H1744.4M1741.6 1063.2V1068.8" stroke="#fff" stroke-width="1.4"/>
<path d="M1759.4 1063.6H1762L1765.4 1060.4V1071.6L1762 1068.4H1759.4Z" fill="#fff" stroke="#333" stroke-width=".4"/><path d="M1767.4 1062.6C1769.2 1064.6 1769.2 1067.4 1767.4 1069.4M1769.6 1060.6C1772.6 1063.6 1772.6 1068.4 1769.6 1071.4" fill="none" stroke="#fff" stroke-width="1"/>
<path d="M1783.6 1059.6V1073" stroke="#fff" stroke-width="1.4"/><path d="M1784.6 1060.2C1788 1058.8 1790 1062 1795.4 1060.4V1066.8C1790 1068.4 1788 1065.2 1784.6 1066.6Z" fill="#fff" stroke="#333" stroke-width=".3"/>
<rect x="1808.6" y="1063" width="10.6" height="7.6" fill="#23405f" stroke="#fff" stroke-width="1.3"/><path d="M1810.6 1073.4H1817.4M1814 1070.6V1073.4" stroke="#fff" stroke-width="1.3"/><path d="M1806.6 1059.4V1065.6H1809.4V1059.4M1808 1065.6V1068" fill="none" stroke="#fff" stroke-width="1"/></svg>
<span class="t" style="left:209px;top:1055px;width:20px;text-align:center;font:bold 18px/22px 'Liberation Sans',sans-serif;color:#c8141c">A</span>
<span class="t" style="left:1682.0px;top:1055.0px;font:12px/16px 'Liberation Sans',sans-serif;color:#fff;letter-spacing:-1.64px;">RU</span>
<span class="t" style="left:1853.0px;top:1057.5px;font:12px/16px 'Liberation Sans',sans-serif;color:#fff;letter-spacing:-0.50px;">14:10</span>
<div style="left:1906px;top:1051px;width:14px;height:29px;background:linear-gradient(90deg,rgba(200,215,235,.55),rgba(120,145,180,.35));border-left:1px solid rgba(20,30,45,.8);box-shadow:inset 1px 0 0 rgba(230,240,250,.5)"></div>
</div></body></html>
